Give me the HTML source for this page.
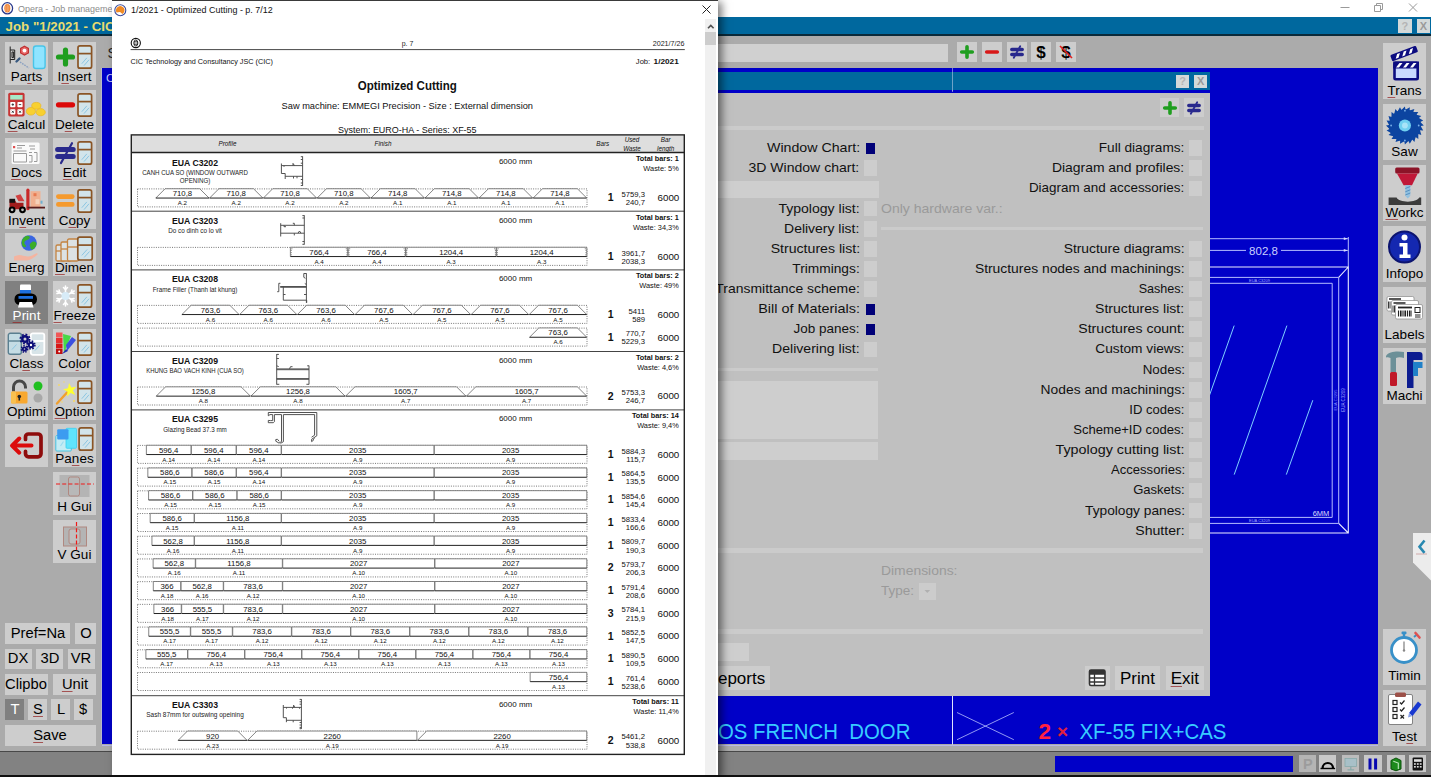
<!DOCTYPE html>
<html lang="en"><head><meta charset="utf-8"><title>Opera - Job management</title>
<style>html,body{margin:0;padding:0}body{width:1431px;height:777px;overflow:hidden;background:#ababab;font-family:"Liberation Sans", sans-serif;}#root{position:relative;width:1431px;height:777px;overflow:hidden}.layer{position:absolute;left:0;top:0;width:1431px;height:777px;overflow:hidden}.layer div,.abs{position:absolute}.t{position:absolute;white-space:pre;line-height:1;}u{text-decoration-color:rgba(150,40,40,.75);text-decoration-thickness:1px;text-underline-offset:2px}svg{overflow:visible}</style></head><body><div id="root">
<div id="app" class="layer">
<div style="left:0px;top:0px;width:1431px;height:17.5px;background:#fff;"></div>
<svg class="abs" style="left:1px;top:1.6px" width="13" height="13" viewBox="0 0 13 13"><ellipse cx="6.3" cy="6.3" rx="5.3" ry="5.6" fill="#fff" stroke="#2a3a8c" stroke-width="1.3"/><ellipse cx="6.3" cy="6.3" rx="3" ry="4.2" fill="#f08030"/><path d="M6.3 2.5v7.6M4.8 3.5v5.6M7.8 3.5v5.6" stroke="#fbd0a8" stroke-width=".5"/></svg>
<span class="t" style="top:3.7px;font-size:9.8px;color:#8c8c8c;left:17.6px;transform:scaleX(0.913);transform-origin:0 50%;">Opera - Job management</span>
<svg class="abs" style="left:1330px;top:0" width="101" height="17" viewBox="0 0 101 17"><g stroke="#9a9a9a" stroke-width="1" fill="none"><path d="M10.5 7.5h9"/><path d="M44.5 5.5h6v6h-6z M46.5 5.5v-2h6v6h-2"/><path d="M79 3.5l8 8M87 3.5l-8 8"/></g></svg>
<div style="left:0px;top:16.8px;width:1431px;height:19.7px;background:#00689e;border-bottom:2px solid #0a2a3a;box-sizing:border-box;"></div>
<div style="left:0px;top:36.5px;width:1431px;height:4px;background:linear-gradient(#8a8a8a,#ababab);"></div>
<span class="t" style="top:19.94px;font-size:13.3px;color:#e8dc70;font-weight:bold;left:5.6px;">Job "1/2021 - CIC</span>
<div style="left:1398px;top:19px;width:13.6px;height:13.9px;background:#d3d9d9;"></div>
<span class="t" style="top:20.89px;font-size:11px;color:#b4b4b4;font-weight:bold;left:1404.8px;transform:translateX(-50%);">?</span>
<div style="left:1416.5px;top:19px;width:13.6px;height:13.9px;background:#d3d9d9;"></div>
<span class="t" style="top:20.89px;font-size:11px;color:#9a9a9a;font-weight:bold;left:1423.3px;transform:translateX(-50%);">X</span>
<div style="left:0px;top:36px;width:1431px;height:741px;background:#ababab;"></div>
<div style="left:120px;top:44px;width:827.7px;height:18px;background:#d0d0d0;"></div>
<span class="t" style="top:46.15px;font-size:14px;color:#222;left:107.5px;">S</span>
<div style="left:957.4px;top:42.2px;width:20px;height:20.2px;background:#cdcdcd;"></div>
<svg class="abs" style="left:958.4px;top:43.4px" width="18" height="18" viewBox="-9 -9 18 18"><path d="M-5.3 0h10.6M0 -5.3v10.6" stroke="#1f9e1f" stroke-width="3.6" stroke-linecap="round"/></svg>
<div style="left:982.03px;top:42.2px;width:20px;height:20.2px;background:#cdcdcd;"></div>
<svg class="abs" style="left:983.03px;top:43.4px" width="18" height="18" viewBox="-9 -9 18 18"><path d="M-5.3 0h10.6" stroke="#d81818" stroke-width="3.6" stroke-linecap="round"/></svg>
<div style="left:1006.66px;top:42.2px;width:20px;height:20.2px;background:#cdcdcd;"></div>
<svg class="abs" style="left:1007.66px;top:43.4px" width="18" height="18" viewBox="-9 -9 18 18"><path d="M-5.2 -2.6h10.4M-5.2 2.6h10.4" stroke="#28288c" stroke-width="3.5" stroke-linecap="round"/><path d="M3.2 -5.8l-6.4 11.6" stroke="#2a2a90" stroke-width="1.8" stroke-linecap="round"/></svg>
<div style="left:1031.29px;top:42.2px;width:20px;height:20.2px;background:#cdcdcd;"></div>
<svg class="abs" style="left:1032.29px;top:43.4px" width="18" height="18" viewBox="-9 -9 18 18"><text x="0" y="5.6" text-anchor="middle" font-family='"Liberation Sans",sans-serif' font-weight="bold" font-size="17" fill="#000">$</text></svg>
<div style="left:1055.92px;top:42.2px;width:20px;height:20.2px;background:#cdcdcd;"></div>
<svg class="abs" style="left:1056.92px;top:43.4px" width="18" height="18" viewBox="-9 -9 18 18"><text x="0" y="5.6" text-anchor="middle" font-family='"Liberation Sans",sans-serif' font-weight="bold" font-size="17" fill="#000">$</text><path d="M-6 -6l12 12" stroke="#e02020" stroke-width="1.6"/></svg>
<div style="left:101.5px;top:67.7px;width:1276.6px;height:676.8px;background:#0000c8;"></div>
<div style="left:100.5px;top:67.7px;width:1px;height:676.8px;background:#b8b8cc;"></div>
<span class="t" style="top:72.57px;font-size:11.5px;color:#c8ccff;left:106px;">C</span>
<div style="left:952.2px;top:67.7px;width:1px;height:24.5px;background:rgba(200,210,235,.55);"></div>
<svg class="abs" style="left:0;top:0" width="1431" height="777" viewBox="0 0 1431 777"><g fill="none" stroke="#b4bcff" stroke-width="1"><path d="M1100 238.7H1347.8M1100 250.4H1246M1281 250.4H1347.8M1348.3 237V267"/><path d="M1347.8 238.7l-4 -1.4v2.8zM1347.8 250.4l-4 -1.4v2.8z" fill="#d8dcff" stroke="none"/><path d="M1100 277.4H1338.7V523.4H1100M1100 283.3H1332.2V517.4H1100"/></g><g fill="none" stroke="#eceeff" stroke-width="1.1"><path d="M1100 267H1348.3V533H1100M1338.7 277.4L1348.3 267M1338.7 523.4L1348.3 533"/></g><g fill="none" stroke="#7fd0ff" stroke-width="1"><path d="M1234.2 325.6L1200 422M1286.9 325.6L1234.2 474.6M1312.8 400.2L1286.3 474.6"/></g><text x="1263.5" y="255" text-anchor="middle" font-family='"Liberation Sans",sans-serif' font-size="11.5" fill="#ccd0ff">802,8</text><text x="1321" y="516.2" text-anchor="middle" font-family='"Liberation Sans",sans-serif' font-size="7.5" fill="#d8dcff">6MM</text><text x="1259.5" y="281.6" text-anchor="middle" font-family='"Liberation Sans",sans-serif' font-size="4" fill="#a0a8ff">EUA C3209</text><text x="1259.5" y="522.2" text-anchor="middle" font-family='"Liberation Sans",sans-serif' font-size="4" fill="#a0a8ff">EUA C3209</text><text transform="translate(1344.8 400) rotate(-90)" text-anchor="middle" font-family='"Liberation Sans",sans-serif' font-size="4.5" fill="#a0a8ff">EUA C3209</text><text transform="translate(1336.6 400) rotate(-90)" text-anchor="middle" font-family='"Liberation Sans",sans-serif' font-size="4" fill="#8088ff">EUA C3295</text><path d="M952.5 696V744.5" stroke="#e0e4ff" stroke-width="1"/><path d="M957 712.5L1013.8 739.7M957 739.7L1013.8 712.5" stroke="#b8c0ff" stroke-width="0.8"/><text x="718" y="739.2" font-family='"Liberation Sans",sans-serif' font-size="22.5" fill="#38ccff" xml:space="preserve" textLength="192.4" lengthAdjust="spacingAndGlyphs">OS FRENCH  DOOR</text><text x="1038.5" y="739.2" font-family='"Liberation Sans",sans-serif' font-size="22.5" font-weight="bold" fill="#ff2040">2</text><text x="1057" y="738" font-family='"Liberation Sans",sans-serif' font-size="19" font-weight="bold" fill="#e0203c">×</text><text x="1079.5" y="739.2" font-family='"Liberation Sans",sans-serif' font-size="22.5" fill="#38ccff" textLength="147" lengthAdjust="spacingAndGlyphs">XF-55 FIX+CAS</text></svg>
<div style="left:0px;top:744.5px;width:1431px;height:7px;background:#ababab;"></div>
<div style="left:101.5px;top:744.5px;width:1276.6px;height:1px;background:#b8b8e8;"></div>
<div style="left:0px;top:750.8px;width:1431px;height:1.3px;background:#484848;"></div>
<div style="left:0px;top:752.1px;width:1431px;height:23px;background:#828282;"></div>
<div style="left:0px;top:775px;width:1431px;height:2px;background:#101010;"></div>
<div style="left:1055px;top:755.6px;width:238px;height:16px;background:#0000c8;"></div>
<div style="left:1298.9px;top:754.5px;width:17.6px;height:17.9px;background:#b4b4b4;"></div><svg class="abs" style="left:1298.9px;top:754.5px" width="17.6" height="17.9" viewBox="0 0 17.6 17.9"><text x="8.8" y="14.2" text-anchor="middle" font-family='"Liberation Sans",sans-serif' font-size="14.5" font-weight="bold" fill="#9c9c9c">P</text></svg><div style="left:1318.9px;top:754.5px;width:17.6px;height:17.9px;background:#c8c8c8;"></div><svg class="abs" style="left:1318.9px;top:754.5px" width="17.6" height="17.9" viewBox="0 0 17.6 17.9"><path d="M2.5 13.2a6.3 6.3 0 0 1 12.6 0h-2.2a4.1 4.1 0 0 0 -8.2 0z" fill="#000"/><path d="M1.5 13.5h14.6" stroke="#000" stroke-width="1.4"/></svg><div style="left:1341.5px;top:754.5px;width:17.6px;height:17.9px;background:#bcbcbc;"></div><svg class="abs" style="left:1341.5px;top:754.5px" width="17.6" height="17.9" viewBox="0 0 17.6 17.9"><rect x="3" y="3.5" width="11.6" height="8" fill="#a8c0c8" stroke="#8aa" stroke-width=".8"/><path d="M8.8 11.5v3M5.5 14.8h6.6" stroke="#8aa" stroke-width="1.2"/></svg><div style="left:1364px;top:754.5px;width:17.6px;height:17.9px;background:#c8c8c8;"></div><svg class="abs" style="left:1364px;top:754.5px" width="17.6" height="17.9" viewBox="0 0 17.6 17.9"><path d="M6 3.5v11M11.6 3.5v11" stroke="#0808b0" stroke-width="3"/></svg><div style="left:1387px;top:754.5px;width:17.6px;height:17.9px;background:#c8c8c8;"></div><svg class="abs" style="left:1387px;top:754.5px" width="17.6" height="17.9" viewBox="0 0 17.6 17.9"><path d="M4 5.5l5-2.5 5 2.5v8.5l-5 1.8-5-1.8z" fill="#1c8a1c" stroke="#0a500a" stroke-width="1"/><path d="M6.3 6.3l5 1.8v6" fill="none" stroke="#bfe8bf" stroke-width="1.1"/></svg><div style="left:1408.9px;top:754.5px;width:17.6px;height:17.9px;background:#c8c8c8;"></div><svg class="abs" style="left:1408.9px;top:754.5px" width="17.6" height="17.9" viewBox="0 0 17.6 17.9"><rect x="3.6" y="2.6" width="10.4" height="12.8" rx="1" fill="#111"/><rect x="5" y="4.2" width="7.6" height="2.6" fill="#ddd"/><g fill="#ddd"><rect x="5" y="8.2" width="1.8" height="1.6"/><rect x="7.9" y="8.2" width="1.8" height="1.6"/><rect x="10.8" y="8.2" width="1.8" height="1.6"/><rect x="5" y="11" width="1.8" height="1.6"/><rect x="7.9" y="11" width="1.8" height="1.6"/><rect x="10.8" y="11" width="1.8" height="1.6"/></g></svg>
<div style="left:5px;top:42.3px;width:43px;height:43px;background:#cdcdcd;"></div><svg class="abs" style="left:5px;top:42.3px" width="43" height="30" viewBox="0 0 43 30"><g fill="none" stroke="#222" stroke-width="1"><path d="M5.2 4.5v17M5.2 8h4.5v9.5H5.2M7 10h1.6v5.6H7z"/></g><path d="M19.5 4.2l3.9 2.2v4.5l-3.9 2.2-3.9-2.2V6.4z" fill="#e86a6a" stroke="#c03030" stroke-width="1.2"/><circle cx="19.5" cy="8.6" r="1.9" fill="#fff"/><path d="M11.5 19.5l3-3" stroke="#3a5a80" stroke-width="2.4" stroke-linecap="round"/><path d="M15 20l9 6" stroke="#8aa0c0" stroke-width="1.4" stroke-dasharray="1.6 1"/><rect x="28.5" y="4" width="11.6" height="22.5" rx="2.6" fill="#8fe4ff" stroke="#48c4e8" stroke-width="1.4"/></svg><span class="t" style="top:70.27px;font-size:13.5px;color:#000;left:26.5px;transform:translateX(-50%);">Pa<u>r</u>ts</span><div style="left:53px;top:42.3px;width:43px;height:43px;background:#cdcdcd;"></div><svg class="abs" style="left:53px;top:42.3px" width="43" height="30" viewBox="0 0 43 30"><path d="M12.5 8v14M5.5 15h14" stroke="#1f9e1f" stroke-width="5.2" stroke-linecap="round"/><g transform="translate(24.2,3)"><rect x=".8" y=".8" width="13.6" height="22.4" rx="2" fill="#d2e4ea" stroke="#8a5526" stroke-width="1.7"/><path d="M.8 8.6h13.6" stroke="#8a5526" stroke-width="1.7"/><path d="M4.6 18.7l5 -5.8M6.8 20.6l5 -5.8" stroke="#8cc6e2" stroke-width="1"/></g></svg><span class="t" style="top:70.27px;font-size:13.5px;color:#000;left:74.5px;transform:translateX(-50%);">I<u>n</u>sert</span><div style="left:5px;top:90.05px;width:43px;height:43px;background:#cdcdcd;"></div><svg class="abs" style="left:5px;top:90.05px" width="43" height="30" viewBox="0 0 43 30"><rect x="3.2" y="2.8" width="16.4" height="23.8" rx="1.8" fill="#c63434"/><rect x="5.2" y="5" width="12.4" height="4.6" fill="#a8e8c8"/><g fill="#fff"><rect x="5.2" y="12" width="5.2" height="5.2" rx=".8"/><rect x="12.4" y="12" width="5.2" height="5.2" rx=".8"/><rect x="5.2" y="19.2" width="5.2" height="5.2" rx=".8"/><rect x="12.4" y="19.2" width="5.2" height="5.2" rx=".8"/></g><g stroke="#333" stroke-width=".9"><path d="M6.6 14.6h2.4M7.8 13.4v2.4M13.8 14.6h2.4M6.8 20.8l2 2M8.8 20.8l-2 2M14 20.8l2 2M16 20.8l-2 2"/></g><g fill="#f8d030" stroke="#eab820" stroke-width=".7"><ellipse cx="31.3" cy="15.8" rx="4.6" ry="3.4"/><ellipse cx="25.9" cy="21.3" rx="4.6" ry="3.8"/><ellipse cx="35.7" cy="22.2" rx="4.6" ry="3.6"/></g></svg><span class="t" style="top:118.02px;font-size:13.5px;color:#000;left:26.5px;transform:translateX(-50%);"><u>C</u>alcul</span><div style="left:53px;top:90.05px;width:43px;height:43px;background:#cdcdcd;"></div><svg class="abs" style="left:53px;top:90.05px" width="43" height="30" viewBox="0 0 43 30"><path d="M5.5 14.8h14" stroke="#dc0808" stroke-width="5.2" stroke-linecap="round"/><g transform="translate(24.2,3)"><rect x=".8" y=".8" width="13.6" height="22.4" rx="2" fill="#d2e4ea" stroke="#8a5526" stroke-width="1.7"/><path d="M.8 8.6h13.6" stroke="#8a5526" stroke-width="1.7"/><path d="M4.6 18.7l5 -5.8M6.8 20.6l5 -5.8" stroke="#8cc6e2" stroke-width="1"/></g></svg><span class="t" style="top:118.02px;font-size:13.5px;color:#000;left:74.5px;transform:translateX(-50%);">D<u>e</u>lete</span><div style="left:5px;top:137.8px;width:43px;height:43px;background:#cdcdcd;"></div><svg class="abs" style="left:5px;top:137.8px" width="43" height="30" viewBox="0 0 43 30"><rect x="6.6" y="4.6" width="28" height="21.5" rx="1.5" fill="#fafafa"/><rect x="8" y="8" width="2.2" height="2.2" fill="#e05050"/><g stroke="#9a9a9a" stroke-width="1" fill="none"><path d="M12 7.5h8M12 10h5M8.5 13h13M8.5 15.5v8.5h13v-8.5zM24 8h6M25 11h5M24 14.5h3M29 14.5h3v9h-3M24 17.5h3v6.5h-3"/></g></svg><span class="t" style="top:165.77px;font-size:13.5px;color:#000;left:26.5px;transform:translateX(-50%);"><u>D</u>ocs</span><div style="left:53px;top:137.8px;width:43px;height:43px;background:#cdcdcd;"></div><svg class="abs" style="left:53px;top:137.8px" width="43" height="30" viewBox="0 0 43 30"><path d="M4.6 11.4h15.6M4.6 18.6h15.6" stroke="#2a2a8c" stroke-width="5" stroke-linecap="round"/><path d="M19 5.2L8 25" stroke="#2a2a8c" stroke-width="2.2" stroke-linecap="round"/><g transform="translate(24.2,3)"><rect x=".8" y=".8" width="13.6" height="22.4" rx="2" fill="#d2e4ea" stroke="#8a5526" stroke-width="1.7"/><path d="M.8 8.6h13.6" stroke="#8a5526" stroke-width="1.7"/><path d="M4.6 18.7l5 -5.8M6.8 20.6l5 -5.8" stroke="#8cc6e2" stroke-width="1"/></g></svg><span class="t" style="top:165.77px;font-size:13.5px;color:#000;left:74.5px;transform:translateX(-50%);"><u>E</u>dit</span><div style="left:5px;top:185.55px;width:43px;height:43px;background:#cdcdcd;"></div><svg class="abs" style="left:5px;top:185.55px" width="43" height="30" viewBox="0 0 43 30"><g transform="translate(0.5,-1.8)"><path d="M25 7h10v16H25z" fill="#f0b090"/><rect x="28" y="9" width="3" height="3" fill="#e87a50"/><rect x="30" y="15" width="4" height="5" fill="#f6d0b8"/><rect x="35" y="16.5" width="2" height="3" fill="#70b0d0"/><path d="M22.4 6v18.5" stroke="#c82828" stroke-width="3.2" stroke-linecap="round"/><path d="M22 23.4h17.5" stroke="#5a1c1c" stroke-width="1.8"/><path d="M4 15h5l2 3.6h7V25H4z" fill="#a01c1c"/><path d="M4 14.6h5.6v4H4z" fill="#111"/><path d="M10 11.5l5-1.5 4 7h-6z" fill="#d04040"/><g fill="#c0c0c0" stroke="#000" stroke-width="2"><circle cx="6.6" cy="25.6" r="2.4"/><circle cx="17" cy="25.6" r="2.4"/></g></g></svg><span class="t" style="top:213.52px;font-size:13.5px;color:#000;left:26.5px;transform:translateX(-50%);">In<u>v</u>ent</span><div style="left:53px;top:185.55px;width:43px;height:43px;background:#cdcdcd;"></div><svg class="abs" style="left:53px;top:185.55px" width="43" height="30" viewBox="0 0 43 30"><path d="M5.3 10.6h14M5.3 18.4h14" stroke="#f59a2e" stroke-width="4.6" stroke-linecap="round"/><g transform="translate(24.2,3)"><rect x=".8" y=".8" width="13.6" height="22.4" rx="2" fill="#d2e4ea" stroke="#8a5526" stroke-width="1.7"/><path d="M.8 8.6h13.6" stroke="#8a5526" stroke-width="1.7"/><path d="M4.6 18.7l5 -5.8M6.8 20.6l5 -5.8" stroke="#8cc6e2" stroke-width="1"/></g></svg><span class="t" style="top:213.52px;font-size:13.5px;color:#000;left:74.5px;transform:translateX(-50%);">C<u>o</u>py</span><div style="left:5px;top:233.3px;width:43px;height:43px;background:#cdcdcd;"></div><svg class="abs" style="left:5px;top:233.3px" width="43" height="30" viewBox="0 0 43 30"><circle cx="24" cy="10" r="7.8" fill="#3a66e0"/><path d="M18.5 5c2-2.5 5-3 6-1.5s-1 3-3 3.8-3 2.7-1 4.7-1 3-2.5 1.5-2-6 .5-8.5zM27 9c2-1 4.5 0 4.5 2s-2.5 5.5-4.5 5.5-1-2-2-3 0-3.5 2-4.5z" fill="#3cae28"/><path d="M9 23.5c3-1.5 6-2 9-.8l5 .8c2 .3 5-1.5 8-3 1.5-.6 2.4.5 1 1.6-3 2.5-7 5.4-10 5.4H9z" fill="#f4b4a0"/></svg><span class="t" style="top:261.27px;font-size:13.5px;color:#000;left:26.5px;transform:translateX(-50%);">Energ</span><div style="left:53px;top:233.3px;width:43px;height:43px;background:#cdcdcd;"></div><svg class="abs" style="left:53px;top:233.3px" width="43" height="30" viewBox="0 0 43 30"><g fill="#dce2e4" stroke="#c48442" stroke-width="1.3"><rect x="3" y="12" width="9" height="16" rx="1.5"/><path d="M3 18h9"/><rect x="8" y="9" width="10" height="19" rx="1.5"/><path d="M8 16h10"/><rect x="14.5" y="6" width="11" height="22" rx="1.5"/><path d="M14.5 14h11"/></g><g transform="translate(24,3.3)"><rect x=".8" y=".8" width="14.4" height="22.9" rx="2" fill="#d2e4ea" stroke="#8a5526" stroke-width="1.7"/><path d="M.8 8.8h14.4" stroke="#8a5526" stroke-width="1.7"/><path d="M4.8 19.1l5.3 -5.9M7.2 21.1l5.3 -5.9" stroke="#8cc6e2" stroke-width="1"/></g></svg><span class="t" style="top:261.27px;font-size:13.5px;color:#000;left:74.5px;transform:translateX(-50%);"><u>D</u>imen</span><div style="left:5px;top:281.05px;width:43px;height:43px;background:#808080;"></div><svg class="abs" style="left:5px;top:281.05px" width="43" height="30" viewBox="0 0 43 30"><rect x="15" y="3.5" width="11" height="9" rx="1" fill="#fff"/><rect x="15" y="9" width="11" height="6" fill="#1c6ee0"/><rect x="9.5" y="12.5" width="22.5" height="11.5" rx="5.5" fill="#000"/><rect x="13.5" y="15" width="14.5" height="2.8" fill="#1c6ee0"/><path d="M14.5 21h12.5l1.5 5.5h-15.5z" fill="#fff"/></svg><span class="t" style="top:309.02px;font-size:13.5px;color:#fff;left:26.5px;transform:translateX(-50%);"><u>P</u>rint</span><div style="left:53px;top:281.05px;width:43px;height:43px;background:#cdcdcd;"></div><svg class="abs" style="left:53px;top:281.05px" width="43" height="30" viewBox="0 0 43 30"><g stroke="#fff" stroke-width="1.6" stroke-linecap="round" fill="none"><path d="M12.5 5v20M3.8 10l17.4 10M3.8 20l17.4-10"/><path d="M10.5 6.5l2 2 2-2M10.5 23.5l2-2 2 2M4 12.5l2.8-.7-.7-2.8M21 17.5l-2.8.7.7 2.8M4 17.5l2.8.7-.7 2.8M21 12.5l-2.8-.7.7-2.8"/></g><circle cx="12.5" cy="15" r="4" fill="#d8ecf8"/><g transform="translate(24.2,3)"><rect x=".8" y=".8" width="13.6" height="22.4" rx="2" fill="#d2e4ea" stroke="#8a5526" stroke-width="1.7"/><path d="M.8 8.6h13.6" stroke="#8a5526" stroke-width="1.7"/><path d="M4.6 18.7l5 -5.8M6.8 20.6l5 -5.8" stroke="#8cc6e2" stroke-width="1"/></g></svg><span class="t" style="top:309.02px;font-size:13.5px;color:#000;left:74.5px;transform:translateX(-50%);"><u>F</u>reeze</span><div style="left:5px;top:328.8px;width:43px;height:43px;background:#cdcdcd;"></div><svg class="abs" style="left:5px;top:328.8px" width="43" height="30" viewBox="0 0 43 30"><g transform="translate(2.5,3.5)"><rect x=".8" y=".8" width="13" height="21" rx="2" fill="#c4dce4" stroke="#5a7f90" stroke-width="1.4"/><path d="M.8 8.5h13" stroke="#5a7f90" stroke-width="1.4"/><path d="M4.5 17l4.5-5" stroke="#8cc6e2" stroke-width="1"/></g><g transform="translate(25,3.5)"><rect x=".8" y=".8" width="13.5" height="21.5" rx="2" fill="#d8e4e8" stroke="#fff" stroke-width="1.8"/><path d="M.8 8.5h13.5" stroke="#fff" stroke-width="1.8"/><path d="M5 18l4.5-5" stroke="#8cc6e2" stroke-width="1"/></g><g fill="none" stroke="#0c0c78"><circle cx="20" cy="10" r="2.7" stroke-width="2.4"/><circle cx="20" cy="10" r="4.6" stroke-width="1.8" stroke-dasharray="1.8 1.8"/><circle cx="26" cy="16" r="2.2" stroke-width="2"/><circle cx="26" cy="16" r="3.9" stroke-width="1.6" stroke-dasharray="1.6 1.5"/><circle cx="19.5" cy="20" r="1.7" stroke-width="1.8"/><circle cx="19.5" cy="20" r="3.2" stroke-width="1.4" stroke-dasharray="1.4 1.3"/></g></svg><span class="t" style="top:356.77px;font-size:13.5px;color:#000;left:26.5px;transform:translateX(-50%);">Cl<u>a</u>ss</span><div style="left:53px;top:328.8px;width:43px;height:43px;background:#cdcdcd;"></div><svg class="abs" style="left:53px;top:328.8px" width="43" height="30" viewBox="0 0 43 30"><g><rect x="3" y="3.5" width="6.5" height="5" fill="#f05858"/><rect x="3" y="9" width="6.5" height="5" fill="#e83030"/><rect x="3" y="14.5" width="6.5" height="5" fill="#d81818"/><rect x="3" y="20" width="6.5" height="5" fill="#c01010"/><circle cx="6.2" cy="22.5" r="1" fill="#fff"/><path d="M10 5l8 2-7 17z" fill="#48d848"/><path d="M13 16l6-8 4 3-9 11z" fill="#3c50e0"/><path d="M9 25l4-5 2 2z" fill="#2030b0"/></g><g transform="translate(24.2,3)"><rect x=".8" y=".8" width="13.6" height="22.4" rx="2" fill="#d2e4ea" stroke="#8a5526" stroke-width="1.7"/><path d="M.8 8.6h13.6" stroke="#8a5526" stroke-width="1.7"/><path d="M4.6 18.7l5 -5.8M6.8 20.6l5 -5.8" stroke="#8cc6e2" stroke-width="1"/></g></svg><span class="t" style="top:356.77px;font-size:13.5px;color:#000;left:74.5px;transform:translateX(-50%);">Co<u>l</u>or</span><div style="left:5px;top:376.55px;width:43px;height:43px;background:#cdcdcd;"></div><svg class="abs" style="left:5px;top:376.55px" width="43" height="30" viewBox="0 0 43 30"><path d="M8.5 14.5v-4.5a6 6 0 0 1 12 0v1.5" fill="none" stroke="#484848" stroke-width="3"/><rect x="6" y="14.5" width="16.5" height="12" rx="1.5" fill="#f8a830"/><rect x="6" y="14.5" width="5" height="12" rx="1.5" fill="#f8c050"/><circle cx="14.3" cy="19.5" r="1.8" fill="#222"/><path d="M14.3 20v3.5" stroke="#222" stroke-width="1.6"/><circle cx="33" cy="9" r="4.5" fill="#20c020"/><circle cx="33" cy="21" r="4.5" fill="#a8a8a8"/></svg><span class="t" style="top:404.52px;font-size:13.5px;color:#000;left:26.5px;transform:translateX(-50%);">Optimi</span><div style="left:53px;top:376.55px;width:43px;height:43px;background:#cdcdcd;"></div><svg class="abs" style="left:53px;top:376.55px" width="43" height="30" viewBox="0 0 43 30"><path d="M4 26.5l10-11" stroke="#f0a030" stroke-width="2.4" stroke-linecap="round"/><path d="M16 6l2.3 4.5 5-.7-3.4 3.7 2.4 4.5-4.7-2-3.6 3.5.5-5-4.5-2.3 5-.9z" fill="#ffff30"/><g fill="#f6d860"><circle cx="6" cy="8" r=".9"/><circle cx="9" cy="25" r=".8"/><circle cx="21" cy="24" r="1"/><circle cx="11" cy="5" r=".7"/></g><g transform="translate(24.2,3)"><rect x=".8" y=".8" width="13.6" height="22.4" rx="2" fill="#d2e4ea" stroke="#8a5526" stroke-width="1.7"/><path d="M.8 8.6h13.6" stroke="#8a5526" stroke-width="1.7"/><path d="M4.6 18.7l5 -5.8M6.8 20.6l5 -5.8" stroke="#8cc6e2" stroke-width="1"/></g></svg><span class="t" style="top:404.52px;font-size:13.5px;color:#000;left:74.5px;transform:translateX(-50%);"><u>O</u>ption</span><div style="left:5px;top:424.3px;width:43px;height:43px;background:#cdcdcd;"></div><svg class="abs" style="left:5px;top:424.3px" width="43" height="43" viewBox="0 0 43 43"><path d="M20.5 15.5v-2.5a3 3 0 0 1 3-3h9.5a3 3 0 0 1 3 3v16.8a3 3 0 0 1-3 3h-9.5a3 3 0 0 1-3-3v-2.5" fill="none" stroke="#8e0c0c" stroke-width="3.7" stroke-linecap="round"/><path d="M9.5 21.6h17M14.3 14.5l-7.3 7.1 7.3 7.1" fill="none" stroke="#dc0c0c" stroke-width="4" stroke-linecap="round" stroke-linejoin="round"/></svg><div style="left:53px;top:424.3px;width:43px;height:43px;background:#cdcdcd;"></div><svg class="abs" style="left:53px;top:424.3px" width="43" height="30" viewBox="0 0 43 30"><rect x="2.8" y="11.5" width="15.5" height="15.5" rx="1" fill="#c4ecf4" stroke="#48c4e0" stroke-width="1"/><rect x="13" y="4.3" width="10.5" height="20" rx="1" fill="#60e4fc" stroke="#38d0f0" stroke-width=".8"/><rect x="4.2" y="5.3" width="11.3" height="10.2" rx="1" fill="#3c9cf0"/><path d="M7.5 22l3-4.5" stroke="#9adcf0" stroke-width="1.2"/><g transform="translate(25.3,3)"><rect x=".8" y=".8" width="13.6" height="22.4" rx="2" fill="#d2e4ea" stroke="#8a5526" stroke-width="1.7"/><path d="M.8 8.6h13.6" stroke="#8a5526" stroke-width="1.7"/><path d="M4.6 18.7l5 -5.8M6.8 20.6l5 -5.8" stroke="#8cc6e2" stroke-width="1"/></g></svg><span class="t" style="top:452.27px;font-size:13.5px;color:#000;left:74.5px;transform:translateX(-50%);">Pa<u>n</u>es</span><div style="left:53px;top:472.05px;width:43px;height:43px;background:#cdcdcd;"></div><svg class="abs" style="left:53px;top:472.05px" width="43" height="30" viewBox="0 0 43 30"><rect x="6.5" y="3" width="30" height="22" fill="#b4b4b4"/><rect x="15.5" y="5" width="11" height="19" rx="2" fill="#b8b8b8" stroke="#b08880" stroke-width="1"/><path d="M3 12h38" stroke="#f01818" stroke-width="1.2" stroke-dasharray="4 2.2"/></svg><span class="t" style="top:500.02px;font-size:13.5px;color:#000;left:74.5px;transform:translateX(-50%);">H Gui</span><div style="left:53px;top:519.8px;width:43px;height:43px;background:#cdcdcd;"></div><svg class="abs" style="left:53px;top:519.8px" width="43" height="30" viewBox="0 0 43 30"><rect x="10.5" y="7" width="23" height="19" fill="#b4b4b4" stroke="#b08880" stroke-width="1"/><rect x="16" y="9" width="11" height="15" rx="2" fill="#c0c0c0" stroke="#b08880" stroke-width="1"/><path d="M23.5 2v28" stroke="#f01818" stroke-width="1.2" stroke-dasharray="4 2.2"/></svg><span class="t" style="top:547.77px;font-size:13.5px;color:#000;left:74.5px;transform:translateX(-50%);">V Gui</span><div style="left:4.7px;top:623.4px;width:65.7px;height:20.5px;background:#cdcdcd;"></div><span class="t" style="top:625.23px;font-size:15.5px;color:#000;left:37.55px;transform:translateX(-50%) scaleX(0.95);">Pref=Na</span><div style="left:75px;top:623.4px;width:21px;height:20.5px;background:#cdcdcd;"></div><span class="t" style="top:625.23px;font-size:15.5px;color:#000;left:85.5px;transform:translateX(-50%) scaleX(0.95);">O</span><div style="left:4.7px;top:648.7px;width:26.9px;height:20.1px;background:#cdcdcd;"></div><span class="t" style="top:650.33px;font-size:15.5px;color:#000;left:18.15px;transform:translateX(-50%) scaleX(0.95);">DX</span><div style="left:36.4px;top:648.7px;width:26.8px;height:20.1px;background:#cdcdcd;"></div><span class="t" style="top:650.33px;font-size:15.5px;color:#000;left:49.8px;transform:translateX(-50%) scaleX(0.95);">3D</span><div style="left:68px;top:648.7px;width:26.9px;height:20.1px;background:#cdcdcd;"></div><span class="t" style="top:650.33px;font-size:15.5px;color:#000;left:81.45px;transform:translateX(-50%) scaleX(0.95);">VR</span><div style="left:4.7px;top:674px;width:43.5px;height:20.5px;background:#cdcdcd;"></div><span class="t" style="top:675.83px;font-size:15.5px;color:#000;left:26.45px;transform:translateX(-50%) scaleX(0.95);">Clipbo</span><div style="left:53.4px;top:674px;width:42.3px;height:20.5px;background:#cdcdcd;"></div><span class="t" style="top:675.83px;font-size:15.5px;color:#000;left:74.55px;transform:translateX(-50%) scaleX(0.95);"><u>U</u>nit</span><div style="left:4.7px;top:699.2px;width:19.8px;height:20.6px;background:#808080;"></div><span class="t" style="top:701.08px;font-size:15.5px;color:#fff;left:14.6px;transform:translateX(-50%) scaleX(0.95);">T</span><div style="left:27.7px;top:699.2px;width:19.7px;height:20.6px;background:#cdcdcd;"></div><span class="t" style="top:701.08px;font-size:15.5px;color:#000;left:37.55px;transform:translateX(-50%) scaleX(0.95);"><u>S</u></span><div style="left:50.6px;top:699.2px;width:19.8px;height:20.6px;background:#cdcdcd;"></div><span class="t" style="top:701.08px;font-size:15.5px;color:#000;left:60.5px;transform:translateX(-50%) scaleX(0.95);">L</span><div style="left:73.5px;top:699.2px;width:19.8px;height:20.6px;background:#cdcdcd;"></div><span class="t" style="top:701.08px;font-size:15.5px;color:#000;left:83.4px;transform:translateX(-50%) scaleX(0.95);">$</span><div style="left:4.7px;top:725px;width:91px;height:20.5px;background:#cdcdcd;"></div><span class="t" style="top:726.83px;font-size:15.5px;color:#000;left:50.2px;transform:translateX(-50%) scaleX(0.95);"><u>S</u>ave</span>
<div style="left:1383px;top:43px;width:43px;height:56px;background:#cdcdcd;"></div><svg class="abs" style="left:1383px;top:43px" width="43" height="42" viewBox="0 0 43 42"><rect x="11.5" y="19.8" width="23.2" height="16.5" rx="1.2" fill="#c8d8ff" stroke="#0c0c80" stroke-width="2.6"/><path d="M10.2 18.5h25.8v7h-25.8z" fill="#0c0c80"/><path d="M13 24.5l3.5-4.5h3l-3.5 4.5zM20 24.5l3.5-4.5h3l-3.5 4.5zM27 24.5l3.5-4.5h3l-3.5 4.5z" fill="#fff"/><g transform="rotate(-20.5 10.5 18.5)"><rect x="9.5" y="11.5" width="27.5" height="6.6" rx="1.3" fill="#0c0c80"/><path d="M13.5 16.8l3-4h3l-3 4zM20.5 16.8l3-4h3l-3 4zM27.5 16.8l3-4h3l-3 4z" fill="#fff"/></g></svg><span class="t" style="top:83.57px;font-size:13.5px;color:#000;left:1404.5px;transform:translateX(-50%);"><u>T</u>rans</span><div style="left:1383px;top:104px;width:43px;height:56px;background:#cdcdcd;"></div><svg class="abs" style="left:1383px;top:104px" width="43" height="42" viewBox="0 0 43 42"><g transform="translate(21.9,21.5)"><path d="M18.9 0L15.8 0.6L18.3 4.9L15.1 4.7L16.4 9.4L13.4 8.4L13.4 13.4L10.7 11.6L9.5 16.4L7.4 14L4.9 18.3L3.5 15.4L0 18.9L-0.6 15.8L-4.9 18.3L-4.7 15.1L-9.4 16.4L-8.4 13.4L-13.4 13.4L-11.6 10.7L-16.4 9.4L-14 7.4L-18.3 4.9L-15.4 3.5L-18.9 0L-15.8 -0.6L-18.3 -4.9L-15.1 -4.7L-16.4 -9.4L-13.4 -8.4L-13.4 -13.4L-10.7 -11.6L-9.5 -16.4L-7.4 -14L-4.9 -18.3L-3.5 -15.4L-0 -18.9L0.6 -15.8L4.9 -18.3L4.7 -15.1L9.5 -16.4L8.4 -13.4L13.4 -13.4L11.6 -10.7L16.4 -9.5L14 -7.4L18.3 -4.9L15.4 -3.5z" fill="#0c44a0"/><circle r="15.9" fill="#0c44a0"/><circle r="6.1" fill="#70d0f0"/><circle r="2.9" fill="#a8e4f8"/><g fill="#7ab0e8"><circle cx="-13.8" cy="0" r=".9"/><circle cx="13.8" cy="0" r=".9"/><circle cx="0" cy="-14.8" r=".9"/><circle cx="0" cy="15" r=".9"/></g></g></svg><span class="t" style="top:144.57px;font-size:13.5px;color:#000;left:1404.5px;transform:translateX(-50%);">Saw</span><div style="left:1383px;top:165px;width:43px;height:56px;background:#cdcdcd;"></div><svg class="abs" style="left:1383px;top:165px" width="43" height="42" viewBox="0 0 43 42"><rect x="12.2" y="2.5" width="24.3" height="6" rx="1.5" fill="#8c1428"/><path d="M14 8.4h20.7l-5.7 11.8h-8.4z" fill="#c01838"/><rect x="22.3" y="20.2" width="5" height="10.5" fill="#90c0e0"/><path d="M22.3 23.5l5-2M22.3 26.8l5-2M22.3 30l5-2" stroke="#5890c0" stroke-width="1"/><path d="M22.3 30.7h5l-2.5 2.8z" fill="#90c0e0"/><path d="M5.6 32.6h8c2 5.5 20.5 5.5 22.5 0h2.1v7.5h-32.6z" fill="#3c3c3c"/></svg><span class="t" style="top:205.57px;font-size:13.5px;color:#000;left:1404.5px;transform:translateX(-50%);"><u>W</u>orkc</span><div style="left:1383px;top:226px;width:43px;height:56px;background:#cdcdcd;"></div><svg class="abs" style="left:1383px;top:226px" width="43" height="42" viewBox="0 0 43 42"><circle cx="21.5" cy="21" r="15.5" fill="#1428b0" stroke="#0c1470" stroke-width="2"/><circle cx="21.5" cy="11.5" r="3" fill="#fff"/><path d="M16.5 17h8v11.5h3v3.5h-11v-3.5h3.5v-8h-3.5z" fill="#fff"/></svg><span class="t" style="top:266.57px;font-size:13.5px;color:#000;left:1404.5px;transform:translateX(-50%);">Infopo</span><div style="left:1383px;top:287px;width:43px;height:56px;background:#cdcdcd;"></div><svg class="abs" style="left:1383px;top:287px" width="43" height="42" viewBox="0 0 43 42"><g transform="translate(0,3.5)"><g stroke="#888" stroke-width=".7" fill="#fff"><rect x="4" y="6" width="27" height="14.5" rx="1.5"/><rect x="8.5" y="10" width="27" height="14.5" rx="1.5"/><rect x="12.5" y="14" width="27" height="14.5" rx="1.5"/></g><g stroke="#222" fill="none"><path d="M6 8.5h12M10.5 12.5h12" stroke-width="1.6"/><path d="M15 17h14" stroke-width="1.8"/><path d="M15.5 20v6M17.5 20v6M19 20v6M21 20v6M22.5 20v6M24.5 20v6M26.5 20v6M28 20v6" stroke-width="1.1"/><rect x="32" y="17" width="5" height="5" stroke-width="1"/><path d="M32 24.5h5.5M32 26.5h5.5" stroke-width="1"/><path d="M5.5 11v7M7 11v7M10 15v7M11.5 15v7" stroke-width=".9"/></g></g></svg><span class="t" style="top:327.57px;font-size:13.5px;color:#000;left:1404.5px;transform:translateX(-50%);">Labels</span><div style="left:1383px;top:348px;width:43px;height:56px;background:#cdcdcd;"></div><svg class="abs" style="left:1383px;top:348px" width="43" height="42" viewBox="0 0 43 42"><path d="M3 8c3-5 12-5 18-4v6c-3-1-6-1-8 0v14h-5.5v-14c-2-1-3-1-4.5-.5z" fill="#6c9098"/><rect x="7" y="24" width="7" height="14" rx="1.5" fill="#c01828"/><path d="M24 4h12.5a3 3 0 0 1 3 3v5h-9v28h-6.5z" fill="#0c1c90"/><path d="M30 14h9.5v6h-4.5v8h-5z" fill="#2080c8"/></svg><span class="t" style="top:388.57px;font-size:13.5px;color:#000;left:1404.5px;transform:translateX(-50%);">Machi</span><div style="left:1383px;top:628.6px;width:43px;height:56px;background:#cdcdcd;"></div><svg class="abs" style="left:1383px;top:628.6px" width="43" height="42" viewBox="0 0 43 42"><circle cx="21" cy="21" r="12.5" fill="#fff" stroke="#3890c8" stroke-width="2.8"/><rect x="18.5" y="2.5" width="5" height="2.8" rx="1" fill="#3890c8"/><path d="M21 5v4" stroke="#3890c8" stroke-width="2.4"/><path d="M31 8l3.5-3" stroke="#3890c8" stroke-width="2"/><path d="M32.5 4l4 4.5" stroke="#e05050" stroke-width="2.6" stroke-linecap="round"/><path d="M21 12.5v9" stroke="#888" stroke-width="1.3"/><circle cx="21" cy="21.5" r="1.2" fill="#888"/></svg><span class="t" style="top:669.17px;font-size:13.5px;color:#000;left:1404.5px;transform:translateX(-50%);">Timin</span><div style="left:1383px;top:689.8px;width:43px;height:56px;background:#cdcdcd;"></div><svg class="abs" style="left:1383px;top:689.8px" width="43" height="42" viewBox="0 0 43 42"><rect x="5.5" y="4.5" width="24" height="30" rx="1.5" fill="#fff" stroke="#777" stroke-width=".9"/><rect x="12" y="2.5" width="11" height="4.5" rx="1.5" fill="#9c5048"/><g fill="none" stroke="#222" stroke-width="1.2"><rect x="10" y="10.5" width="4" height="4"/><rect x="10" y="17.5" width="4" height="4"/><rect x="10" y="24.5" width="4" height="4"/><path d="M17 12.5l1.5 1.5 3-3.5M17 19.5l1.5 1.5 3-3.5M17.5 25l3.5 3.5M21 25l-3.5 3.5"/></g><path d="M26 23l9-11.5 3.5 3-9 11.5z" fill="#1838d0"/><path d="M26 23l3.5 3-4.5 1.5z" fill="#88a0e8"/></svg><span class="t" style="top:730.37px;font-size:13.5px;color:#000;left:1404.5px;transform:translateX(-50%);">Te<u>s</u>t</span><svg class="abs" style="left:1413px;top:533.4px" width="18" height="48" viewBox="0 0 18 48"><path d="M0 0h18v47.5L0 29.5z" fill="#ececec"/><path d="M11.5 7.5l-5 6.2 5 6.2" fill="none" stroke="#2888b0" stroke-width="2.6"/><path d="M3 21h11" stroke="#c08080" stroke-width=".6"/></svg>
</div>
<div id="dlg" class="layer">
<div style="left:600px;top:72.4px;width:609.6px;height:18.1px;background:#00689e;"></div>
<div style="left:600px;top:90.5px;width:609.6px;height:2px;background:#0000c8;"></div>
<div style="left:600px;top:92.5px;width:609.6px;height:603.5px;background:#c0c0c0;"></div>
<div style="left:952.2px;top:72.4px;width:1px;height:20px;background:rgba(200,210,235,.55);"></div>
<div style="left:1175.9px;top:74.7px;width:13.2px;height:13px;background:#d3d9d9;"></div>
<span class="t" style="top:76.09px;font-size:11px;color:#b4b4b4;font-weight:bold;left:1182.5px;transform:translateX(-50%);">?</span>
<div style="left:1194px;top:74.7px;width:13.2px;height:13px;background:#d3d9d9;"></div>
<span class="t" style="top:76.09px;font-size:11px;color:#9a9a9a;font-weight:bold;left:1200.6px;transform:translateX(-50%);">X</span>
<div style="left:1159.8px;top:98px;width:19.5px;height:18.7px;background:#cdcdcd;"></div>
<svg class="abs" style="left:1160.5px;top:99.2px" width="18" height="18" viewBox="-9 -9 18 18"><path d="M-5.3 0h10.6M0 -5.3v10.6" stroke="#1f9e1f" stroke-width="3.6" stroke-linecap="round"/></svg>
<div style="left:1184.4px;top:98px;width:19.5px;height:18.7px;background:#cdcdcd;"></div>
<svg class="abs" style="left:1185.2px;top:99.2px" width="18" height="18" viewBox="-9 -9 18 18"><path d="M-5.2 -2.6h10.4M-5.2 2.6h10.4" stroke="#28288c" stroke-width="3.5" stroke-linecap="round"/><path d="M3.2 -5.8l-6.4 11.6" stroke="#2a2a90" stroke-width="1.8" stroke-linecap="round"/></svg>
<div style="left:600px;top:125.7px;width:604.2px;height:4.6px;background:#cbcbcb;"></div>
<span class="t" style="top:141.19px;font-size:13.6px;color:#111;right:571.3px;transform:scaleX(1.045);transform-origin:100% 50%;">Window Chart:</span>
<div style="left:866px;top:142.7px;width:9px;height:11px;background:#000078;"></div>
<span class="t" style="top:161.32px;font-size:13.6px;color:#111;right:571.3px;transform:scaleX(1.033);transform-origin:100% 50%;">3D Window chart:</span>
<div style="left:863.7px;top:160.43px;width:13.2px;height:15.8px;background:#cdcdcd;"></div>
<span class="t" style="top:201.58px;font-size:13.6px;color:#111;right:571.3px;transform:scaleX(1.033);transform-origin:100% 50%;">Typology list:</span>
<div style="left:863.7px;top:200.69px;width:13.2px;height:15.8px;background:#cdcdcd;"></div>
<span class="t" style="top:221.71px;font-size:13.6px;color:#111;right:571.3px;transform:scaleX(1.026);transform-origin:100% 50%;">Delivery list:</span>
<div style="left:863.7px;top:220.82px;width:13.2px;height:15.8px;background:#cdcdcd;"></div>
<span class="t" style="top:241.84px;font-size:13.6px;color:#111;right:571.3px;transform:scaleX(1.039);transform-origin:100% 50%;">Structures list:</span>
<div style="left:863.7px;top:240.95px;width:13.2px;height:15.8px;background:#cdcdcd;"></div>
<span class="t" style="top:261.97px;font-size:13.6px;color:#111;right:571.3px;transform:scaleX(1.011);transform-origin:100% 50%;">Trimmings:</span>
<div style="left:863.7px;top:261.08px;width:13.2px;height:15.8px;background:#cdcdcd;"></div>
<span class="t" style="top:282.1px;font-size:13.6px;color:#111;right:571.3px;transform:scaleX(1.026);transform-origin:100% 50%;">Transmittance scheme:</span>
<div style="left:863.7px;top:281.21px;width:13.2px;height:15.8px;background:#cdcdcd;"></div>
<span class="t" style="top:302.23px;font-size:13.6px;color:#111;right:571.3px;transform:scaleX(1.06);transform-origin:100% 50%;">Bill of Materials:</span>
<div style="left:866px;top:303.74px;width:9px;height:11px;background:#000078;"></div>
<span class="t" style="top:322.36px;font-size:13.6px;color:#111;right:571.3px;transform:scaleX(0.992);transform-origin:100% 50%;">Job panes:</span>
<div style="left:866px;top:323.87px;width:9px;height:11px;background:#000078;"></div>
<span class="t" style="top:342.49px;font-size:13.6px;color:#111;right:571.3px;transform:scaleX(1.034);transform-origin:100% 50%;">Delivering list:</span>
<div style="left:863.7px;top:341.6px;width:13.2px;height:15.8px;background:#cdcdcd;"></div>
<div style="left:600px;top:180.5px;width:279px;height:17.5px;background:#cecece;"></div>
<span class="t" style="top:201.58px;font-size:13.6px;color:#9a9a9a;left:881px;transform:scaleX(1.032);transform-origin:0 50%;">Only hardware var.:</span>
<div style="left:881px;top:226.5px;width:321.5px;height:3.6px;background:#cbcbcb;"></div>
<span class="t" style="top:141.19px;font-size:13.6px;color:#111;right:246.4px;transform:scaleX(1.003);transform-origin:100% 50%;">Full diagrams:</span>
<div style="left:1188.9px;top:140.3px;width:13.5px;height:15.8px;background:#cdcdcd;"></div>
<span class="t" style="top:161.32px;font-size:13.6px;color:#111;right:246.4px;transform:scaleX(1.024);transform-origin:100% 50%;">Diagram and profiles:</span>
<div style="left:1188.9px;top:160.43px;width:13.5px;height:15.8px;background:#cdcdcd;"></div>
<span class="t" style="top:181.45px;font-size:13.6px;color:#111;right:246.4px;transform:scaleX(0.988);transform-origin:100% 50%;">Diagram and accessories:</span>
<div style="left:1188.9px;top:180.56px;width:13.5px;height:15.8px;background:#cdcdcd;"></div>
<span class="t" style="top:241.84px;font-size:13.6px;color:#111;right:246.4px;transform:scaleX(1.02);transform-origin:100% 50%;">Structure diagrams:</span>
<div style="left:1188.9px;top:240.95px;width:13.5px;height:15.8px;background:#cdcdcd;"></div>
<span class="t" style="top:261.97px;font-size:13.6px;color:#111;right:246.4px;transform:scaleX(1.02);transform-origin:100% 50%;">Structures nodes and machinings:</span>
<div style="left:1188.9px;top:261.08px;width:13.5px;height:15.8px;background:#cdcdcd;"></div>
<span class="t" style="top:282.1px;font-size:13.6px;color:#111;right:246.4px;transform:scaleX(0.926);transform-origin:100% 50%;">Sashes:</span>
<div style="left:1188.9px;top:281.21px;width:13.5px;height:15.8px;background:#cdcdcd;"></div>
<span class="t" style="top:302.23px;font-size:13.6px;color:#111;right:246.4px;transform:scaleX(1.034);transform-origin:100% 50%;">Structures list:</span>
<div style="left:1188.9px;top:301.34px;width:13.5px;height:15.8px;background:#cdcdcd;"></div>
<span class="t" style="top:322.36px;font-size:13.6px;color:#111;right:246.4px;transform:scaleX(1.036);transform-origin:100% 50%;">Structures count:</span>
<div style="left:1188.9px;top:321.47px;width:13.5px;height:15.8px;background:#cdcdcd;"></div>
<span class="t" style="top:342.49px;font-size:13.6px;color:#111;right:246.4px;transform:scaleX(1.008);transform-origin:100% 50%;">Custom views:</span>
<div style="left:1188.9px;top:341.6px;width:13.5px;height:15.8px;background:#cdcdcd;"></div>
<span class="t" style="top:362.62px;font-size:13.6px;color:#111;right:246.4px;transform:scaleX(0.984);transform-origin:100% 50%;">Nodes:</span>
<div style="left:1188.9px;top:361.73px;width:13.5px;height:15.8px;background:#cdcdcd;"></div>
<span class="t" style="top:382.75px;font-size:13.6px;color:#111;right:246.4px;transform:scaleX(1.017);transform-origin:100% 50%;">Nodes and machinings:</span>
<div style="left:1188.9px;top:381.86px;width:13.5px;height:15.8px;background:#cdcdcd;"></div>
<span class="t" style="top:402.88px;font-size:13.6px;color:#111;right:246.4px;transform:scaleX(0.959);transform-origin:100% 50%;">ID codes:</span>
<div style="left:1188.9px;top:401.99px;width:13.5px;height:15.8px;background:#cdcdcd;"></div>
<span class="t" style="top:423.01px;font-size:13.6px;color:#111;right:246.4px;transform:scaleX(0.964);transform-origin:100% 50%;">Scheme+ID codes:</span>
<div style="left:1188.9px;top:422.12px;width:13.5px;height:15.8px;background:#cdcdcd;"></div>
<span class="t" style="top:443.14px;font-size:13.6px;color:#111;right:246.4px;transform:scaleX(1.053);transform-origin:100% 50%;">Typology cutting list:</span>
<div style="left:1188.9px;top:442.25px;width:13.5px;height:15.8px;background:#cdcdcd;"></div>
<span class="t" style="top:463.27px;font-size:13.6px;color:#111;right:246.4px;transform:scaleX(0.96);transform-origin:100% 50%;">Accessories:</span>
<div style="left:1188.9px;top:462.38px;width:13.5px;height:15.8px;background:#cdcdcd;"></div>
<span class="t" style="top:483.4px;font-size:13.6px;color:#111;right:246.4px;transform:scaleX(0.96);transform-origin:100% 50%;">Gaskets:</span>
<div style="left:1188.9px;top:482.51px;width:13.5px;height:15.8px;background:#cdcdcd;"></div>
<span class="t" style="top:503.53px;font-size:13.6px;color:#111;right:246.4px;transform:scaleX(1.01);transform-origin:100% 50%;">Typology panes:</span>
<div style="left:1188.9px;top:502.64px;width:13.5px;height:15.8px;background:#cdcdcd;"></div>
<span class="t" style="top:523.66px;font-size:13.6px;color:#111;right:246.4px;transform:scaleX(1.037);transform-origin:100% 50%;">Shutter:</span>
<div style="left:1188.9px;top:522.77px;width:13.5px;height:15.8px;background:#cdcdcd;"></div>
<div style="left:600px;top:368.4px;width:278.4px;height:2.8px;background:#cbcbcb;"></div>
<div style="left:600px;top:380.8px;width:278.4px;height:58.7px;background:#cecece;"></div>
<div style="left:600px;top:441.5px;width:278.4px;height:18.1px;background:#cecece;"></div>
<div style="left:600px;top:548.2px;width:602.5px;height:4.5px;background:#cbcbcb;"></div>
<span class="t" style="top:564.29px;font-size:13.6px;color:#9a9a9a;left:881px;transform:scaleX(1.022);transform-origin:0 50%;">Dimensions:</span>
<span class="t" style="top:584.39px;font-size:13.6px;color:#9a9a9a;left:881px;transform:scaleX(0.992);transform-origin:0 50%;">Type:</span>
<div style="left:919px;top:583.3px;width:16.5px;height:16.5px;background:#cccccc;"></div>
<svg class="abs" style="left:919px;top:583.3px" width="16.5" height="16.5" viewBox="0 0 16.5 16.5"><path d="M5.5 7l2.8 3 2.8-3z" fill="#b0b0b0"/></svg>
<div style="left:600px;top:629.2px;width:602.5px;height:4.6px;background:#cbcbcb;"></div>
<div style="left:600px;top:643.3px;width:148.7px;height:17.3px;background:#cecece;"></div>
<div style="left:700px;top:666.4px;width:69.8px;height:24px;background:#cdcdcd;"></div>
<span class="t" style="top:670.11px;font-size:17px;color:#000;left:705.7px;">Reports</span>
<div style="left:1085.3px;top:666.4px;width:24.5px;height:23.4px;background:#cdcdcd;"></div>
<svg class="abs" style="left:1085.3px;top:666.4px" width="24.5" height="23.4" viewBox="0 0 24.5 23.4"><rect x="4.5" y="4" width="15.5" height="15.5" rx="1.5" fill="#fff" stroke="#333" stroke-width="1.6"/><path d="M4.5 8h15.5M4.5 12h15.5M4.5 16h15.5M9.5 8v11.5" stroke="#333" stroke-width="1.3"/><rect x="4.5" y="4" width="15.5" height="4" fill="#333"/></svg>
<div style="left:1115px;top:666.4px;width:44.9px;height:23.4px;background:#cdcdcd;"></div>
<span class="t" style="top:669.91px;font-size:17px;color:#000;left:1137.5px;transform:translateX(-50%);">Print</span>
<div style="left:1165.7px;top:666.4px;width:38.1px;height:23.4px;background:#cdcdcd;"></div>
<span class="t" style="top:669.91px;font-size:17px;color:#000;left:1184.8px;transform:translateX(-50%);"><u>E</u>xit</span>
</div>
<div id="doc" class="layer">
<div style="left:112.2px;top:0px;width:605.4px;height:777px;background:#fff;box-shadow:4px 2px 8px 0 rgba(0,0,0,.5);"></div>
<div style="left:112.2px;top:0px;width:605.4px;height:1px;background:#3a3a3a;"></div>
<div style="left:112.2px;top:775.2px;width:605.4px;height:1.8px;background:#101010;"></div>
<svg class="abs" style="left:114px;top:3.5px" width="13" height="13" viewBox="0 0 13 13"><circle cx="6.3" cy="6.3" r="5.5" fill="#fff" stroke="#3a4a9a" stroke-width="1.1"/><path d="M2.5 8.5a4.3 4.3 0 1 1 6 1.5l-2.5 -2z" fill="#f08a24"/></svg>
<span class="t" style="top:4.8px;font-size:9.8px;color:#111;left:130.6px;transform:scaleX(0.913);transform-origin:0 50%;">1/2021 - Optimized Cutting - p. 7/12</span>
<svg class="abs" style="left:700px;top:3px" width="14" height="14" viewBox="0 0 14 14"><path d="M2.5 2.5l8 8M10.5 2.5l-8 8" stroke="#222" stroke-width="1"/></svg>
<div style="left:705.2px;top:19.3px;width:10.8px;height:756px;background:#f0f0f0;"></div>
<div style="left:705.2px;top:32.3px;width:10.8px;height:12.5px;background:#cdcdcd;"></div>
<svg class="abs" style="left:705.2px;top:20.5px" width="11.3" height="11" viewBox="0 0 11.3 11"><path d="M3 7.3l2.8-2.9 2.8 2.9" fill="none" stroke="#505050" stroke-width="1.6"/></svg>
<svg class="abs" style="left:0;top:0" width="1431" height="777" viewBox="0 0 1431 777" font-family='"Liberation Sans",sans-serif' fill="#111"><style>.dot{fill:none;stroke:#555;stroke-width:.8;stroke-dasharray:1 1.300}.pc{fill:#fff;stroke:#666;stroke-width:.8}.pb{fill:none;stroke:#222;stroke-width:1}.ic{fill:none;stroke:#4a4a4a;stroke-width:.95}</style><circle cx="135.8" cy="43" r="4.6" fill="none" stroke="#111" stroke-width="1.1"/><ellipse cx="135.8" cy="43" rx="2" ry="3" fill="none" stroke="#111" stroke-width=".9"/><path d="M134 41.5h3.6M134 43h3.6M134 44.5h3.6" stroke="#111" stroke-width=".6"/><text x="407.5" y="45.9" font-size="7.6" text-anchor="middle" fill="#222" textLength="11.6" lengthAdjust="spacingAndGlyphs">p. 7</text><text x="684.5" y="45.9" font-size="7.6" text-anchor="end" fill="#222" textLength="31.8" lengthAdjust="spacingAndGlyphs">2021/7/26</text><path d="M130.6 49.6H684.8" stroke="#333" stroke-width=".9"/><text x="130.6" y="63.7" font-size="7.4" textLength="142.3" lengthAdjust="spacingAndGlyphs">CIC Technology and Consultancy JSC (CIC)</text><text x="650.2" y="63.7" font-size="7.6" text-anchor="end">Job:</text><text x="653.6" y="63.7" font-size="7.6" font-weight="bold" textLength="25.2" lengthAdjust="spacingAndGlyphs">1/2021</text><text x="407.3" y="90.4" font-size="11.9" text-anchor="middle" font-weight="bold" textLength="99.2" lengthAdjust="spacingAndGlyphs">Optimized Cutting</text><text x="407.3" y="109.4" font-size="9.3" text-anchor="middle" textLength="251.4" lengthAdjust="spacingAndGlyphs">Saw machine: EMMEGI Precision - Size : External dimension</text><text x="407.3" y="132.6" font-size="9.3" text-anchor="middle" textLength="138.6" lengthAdjust="spacingAndGlyphs">System: EURO-HA - Series: XF-55</text><rect x="131.7" y="135.4" width="552.6" height="16.6" fill="#dedede"/><text x="227.5" y="146.2" font-size="6.3" text-anchor="middle" font-style="italic">Profile</text><text x="383" y="146.2" font-size="6.3" text-anchor="middle" font-style="italic">Finish</text><text x="602.8" y="146.2" font-size="6.3" text-anchor="middle" font-style="italic">Bars</text><text x="632" y="142.4" font-size="6.3" text-anchor="middle" font-style="italic">Used</text><text x="632" y="150.8" font-size="6.3" text-anchor="middle" font-style="italic">Waste</text><text x="665.6" y="142.4" font-size="6.3" text-anchor="middle" font-style="italic">Bar</text><text x="665.6" y="150.8" font-size="6.3" text-anchor="middle" font-style="italic">length</text><text x="195" y="165.9" font-size="9.3" text-anchor="middle" font-weight="bold" textLength="46" lengthAdjust="spacingAndGlyphs">EUA C3202</text><text x="195" y="175.2" font-size="6.4" text-anchor="middle" fill="#222" textLength="105.7" lengthAdjust="spacingAndGlyphs">CANH CUA SO (WINDOW OUTWARD</text><text x="195" y="182.9" font-size="6.4" text-anchor="middle" fill="#222" textLength="30.5" lengthAdjust="spacingAndGlyphs">OPENING)</text><path class="ic" d="M302.6 156.3V185.9M300.8 156.7h1.8M300.8 159.5h1.8M300.8 163.2h1.8M300.8 179.5h1.8M300.8 183h1.8M300.8 185.5h1.8M281.4 163.5V173.5H285.2V179M281.4 165.6H302.6M285.2 176.3H302.6M293 165.6v-2.2l1.5 2.2M284 165.6v1.2M293.5 176.3v2.2M297 176.3v2"/><text x="515.6" y="164.1" font-size="8" text-anchor="middle">6000 mm</text><text x="678.8" y="161.1" font-size="7.3" text-anchor="end" font-weight="bold">Total bars: 1</text><text x="678.8" y="171" font-size="7.4" text-anchor="end">Waste: 5%</text><rect x="137.5" y="188.9" width="449.5" height="18" class="dot"/><path class="pc" d="M155.8 198.05L165.1 188.75H199.75L209.05 198.05"/><path class="pb" d="M155.8 198.05H209.05"/><text x="182.42" y="196.2" font-size="7.8" text-anchor="middle">710,8</text><text x="182.42" y="205.2" font-size="6.2" text-anchor="middle">A.2</text><path class="pc" d="M209.58 198.05L218.88 188.75H253.53L262.83 198.05"/><path class="pb" d="M209.58 198.05H262.83"/><text x="236.21" y="196.2" font-size="7.8" text-anchor="middle">710,8</text><text x="236.21" y="205.2" font-size="6.2" text-anchor="middle">A.2</text><path class="pc" d="M263.37 198.05L272.67 188.75H307.32L316.62 198.05"/><path class="pb" d="M263.37 198.05H316.62"/><text x="289.99" y="196.2" font-size="7.8" text-anchor="middle">710,8</text><text x="289.99" y="205.2" font-size="6.2" text-anchor="middle">A.2</text><path class="pc" d="M317.15 198.05L326.45 188.75H361.1L370.4 198.05"/><path class="pb" d="M317.15 198.05H370.4"/><text x="343.78" y="196.2" font-size="7.8" text-anchor="middle">710,8</text><text x="343.78" y="205.2" font-size="6.2" text-anchor="middle">A.2</text><path class="pc" d="M370.93 198.05L380.23 188.75H415.18L424.48 198.05"/><path class="pb" d="M370.93 198.05H424.48"/><text x="397.71" y="196.2" font-size="7.8" text-anchor="middle">714,8</text><text x="397.71" y="205.2" font-size="6.2" text-anchor="middle">A.1</text><path class="pc" d="M425.02 198.05L434.32 188.75H469.27L478.57 198.05"/><path class="pb" d="M425.02 198.05H478.57"/><text x="451.79" y="196.2" font-size="7.8" text-anchor="middle">714,8</text><text x="451.79" y="205.2" font-size="6.2" text-anchor="middle">A.1</text><path class="pc" d="M479.1 198.05L488.4 188.75H523.35L532.65 198.05"/><path class="pb" d="M479.1 198.05H532.65"/><text x="505.88" y="196.2" font-size="7.8" text-anchor="middle">714,8</text><text x="505.88" y="205.2" font-size="6.2" text-anchor="middle">A.1</text><path class="pc" d="M533.18 198.05L542.48 188.75H577.43L586.73 198.05"/><path class="pb" d="M533.18 198.05H586.73"/><text x="559.96" y="196.2" font-size="7.8" text-anchor="middle">714,8</text><text x="559.96" y="205.2" font-size="6.2" text-anchor="middle">A.1</text><text x="610.6" y="201.4" font-size="10.5" text-anchor="middle" font-weight="bold">1</text><text x="645" y="197" font-size="7.7" text-anchor="end">5759,3</text><text x="645" y="205.2" font-size="7.7" text-anchor="end">240,7</text><text x="679.3" y="201.3" font-size="9.8" text-anchor="end">6000</text><text x="195" y="223.6" font-size="9.3" text-anchor="middle" font-weight="bold" textLength="46" lengthAdjust="spacingAndGlyphs">EUA C3203</text><text x="195" y="232.9" font-size="6.4" text-anchor="middle" fill="#222" textLength="53.5" lengthAdjust="spacingAndGlyphs">Do co dinh co lo vit</text><path class="ic" d="M304.3 215.3V244.6M302.4 215.6h1.9M302.4 218h1.9M302.4 241.5h1.9M302.4 244.3h1.9M280.7 223.2V236.5M280.7 225.3H304.3M280.7 233.2H304.3M294.3 225.3v-2h-1.5M294.3 233.2v2.2M284 225.3v1.4h2M298 233.2l1.5-2.2 1.5 2.2"/><text x="515.6" y="222.7" font-size="8" text-anchor="middle">6000 mm</text><text x="678.8" y="219.7" font-size="7.3" text-anchor="end" font-weight="bold">Total bars: 1</text><text x="678.8" y="229.6" font-size="7.4" text-anchor="end">Waste: 34,3%</text><rect x="137.5" y="247.4" width="449.5" height="18" class="dot"/><path class="pc" d="M290.39 256.55V247.25H347.81V256.55"/><path class="dot" d="M292.39 248.75h-1.2v6.3h1.2M345.81 248.75h1.2v6.3h-1.2"/><path class="pb" d="M290.39 256.55H347.81"/><text x="319.1" y="254.7" font-size="7.8" text-anchor="middle">766,4</text><text x="319.1" y="263.7" font-size="6.2" text-anchor="middle">A.4</text><path class="pc" d="M348.18 256.55V247.25H405.6V256.55"/><path class="dot" d="M350.18 248.75h-1.2v6.3h1.2M403.6 248.75h1.2v6.3h-1.2"/><path class="pb" d="M348.18 256.55H405.6"/><text x="376.89" y="254.7" font-size="7.8" text-anchor="middle">766,4</text><text x="376.89" y="263.7" font-size="6.2" text-anchor="middle">A.4</text><path class="pc" d="M405.98 256.55V247.25H496.21V256.55"/><path class="dot" d="M407.98 248.75h-1.2v6.3h1.2M494.21 248.75h1.2v6.3h-1.2"/><path class="pb" d="M405.98 256.55H496.21"/><text x="451.09" y="254.7" font-size="7.8" text-anchor="middle">1204,4</text><text x="451.09" y="263.7" font-size="6.2" text-anchor="middle">A.3</text><path class="pc" d="M496.58 256.55V247.25H586.81V256.55"/><path class="dot" d="M498.58 248.75h-1.2v6.3h1.2M584.81 248.75h1.2v6.3h-1.2"/><path class="pb" d="M496.58 256.55H586.81"/><text x="541.7" y="254.7" font-size="7.8" text-anchor="middle">1204,4</text><text x="541.7" y="263.7" font-size="6.2" text-anchor="middle">A.3</text><text x="610.6" y="259.9" font-size="10.5" text-anchor="middle" font-weight="bold">1</text><text x="645" y="255.5" font-size="7.7" text-anchor="end">3961,7</text><text x="645" y="263.7" font-size="7.7" text-anchor="end">2038,3</text><text x="679.3" y="259.8" font-size="9.8" text-anchor="end">6000</text><text x="195" y="282.3" font-size="9.3" text-anchor="middle" font-weight="bold" textLength="46" lengthAdjust="spacingAndGlyphs">EUA C3208</text><text x="195" y="291.6" font-size="6.4" text-anchor="middle" fill="#222" textLength="84.5" lengthAdjust="spacingAndGlyphs">Frame Filler (Thanh lat khung)</text><path class="ic" d="M306.4 273.3V302.9M303.8 273.5h2.6M303.8 273.5v3.8l1.6 1M304.8 283.5l1.6 1M280.2 286.5H306.4M280.2 287.3H306.4M278.8 283.3V291.7M278.8 283.3h1.6M278.8 291.7h-1.6M283.3 286.7V300.2H306.4M283.3 294.5h2.2M304 294.5h2.4M306.7 300.2v2.5"/><text x="515.6" y="281.4" font-size="8" text-anchor="middle">6000 mm</text><text x="678.8" y="278.4" font-size="7.3" text-anchor="end" font-weight="bold">Total bars: 2</text><text x="678.8" y="288.3" font-size="7.4" text-anchor="end">Waste: 49%</text><rect x="137.5" y="305.4" width="449.5" height="18" class="dot"/><path class="pc" d="M181.89 314.55L191.19 305.25H229.8L239.1 314.55"/><path class="pb" d="M181.89 314.55H239.1"/><text x="210.5" y="312.7" font-size="7.8" text-anchor="middle">763,6</text><text x="210.5" y="321.7" font-size="6.2" text-anchor="middle">A.6</text><path class="pc" d="M239.63 314.55L248.93 305.25H287.54L296.84 314.55"/><path class="pb" d="M239.63 314.55H296.84"/><text x="268.23" y="312.7" font-size="7.8" text-anchor="middle">763,6</text><text x="268.23" y="321.7" font-size="6.2" text-anchor="middle">A.6</text><path class="pc" d="M297.37 314.55L306.67 305.25H345.28L354.58 314.55"/><path class="pb" d="M297.37 314.55H354.58"/><text x="325.97" y="312.7" font-size="7.8" text-anchor="middle">763,6</text><text x="325.97" y="321.7" font-size="6.2" text-anchor="middle">A.6</text><path class="pc" d="M355.11 314.55L364.41 305.25H403.32L412.62 314.55"/><path class="pb" d="M355.11 314.55H412.62"/><text x="383.86" y="312.7" font-size="7.8" text-anchor="middle">767,6</text><text x="383.86" y="321.7" font-size="6.2" text-anchor="middle">A.5</text><path class="pc" d="M413.15 314.55L422.45 305.25H461.36L470.66 314.55"/><path class="pb" d="M413.15 314.55H470.66"/><text x="441.9" y="312.7" font-size="7.8" text-anchor="middle">767,6</text><text x="441.9" y="321.7" font-size="6.2" text-anchor="middle">A.5</text><path class="pc" d="M471.19 314.55L480.49 305.25H519.39L528.69 314.55"/><path class="pb" d="M471.19 314.55H528.69"/><text x="499.94" y="312.7" font-size="7.8" text-anchor="middle">767,6</text><text x="499.94" y="321.7" font-size="6.2" text-anchor="middle">A.5</text><path class="pc" d="M529.23 314.55L538.53 305.25H577.43L586.73 314.55"/><path class="pb" d="M529.23 314.55H586.73"/><text x="557.98" y="312.7" font-size="7.8" text-anchor="middle">767,6</text><text x="557.98" y="321.7" font-size="6.2" text-anchor="middle">A.5</text><text x="610.6" y="317.9" font-size="10.5" text-anchor="middle" font-weight="bold">1</text><text x="645" y="313.5" font-size="7.7" text-anchor="end">5411</text><text x="645" y="321.7" font-size="7.7" text-anchor="end">589</text><text x="679.3" y="317.8" font-size="9.8" text-anchor="end">6000</text><rect x="137.5" y="328.11" width="449.5" height="18" class="dot"/><path class="pc" d="M529.53 337.26L538.83 327.96H577.43L586.73 337.26"/><path class="pb" d="M529.53 337.26H586.73"/><text x="558.13" y="335.41" font-size="7.8" text-anchor="middle">763,6</text><text x="558.13" y="344.41" font-size="6.2" text-anchor="middle">A.6</text><text x="610.6" y="340.61" font-size="10.5" text-anchor="middle" font-weight="bold">1</text><text x="645" y="336.21" font-size="7.7" text-anchor="end">770,7</text><text x="645" y="344.41" font-size="7.7" text-anchor="end">5229,3</text><text x="679.3" y="340.51" font-size="9.8" text-anchor="end">6000</text><text x="195" y="363.9" font-size="9.3" text-anchor="middle" font-weight="bold" textLength="46" lengthAdjust="spacingAndGlyphs">EUA C3209</text><text x="195" y="373.2" font-size="6.4" text-anchor="middle" fill="#222" textLength="97.5" lengthAdjust="spacingAndGlyphs">KHUNG BAO VACH KINH (CUA SO)</text><path class="ic" d="M276.7 354.1V384.6M276.7 354.4h2.2M276.7 358.5h2.2M276.7 365.8l2 .8M309 365.6V384.4M307.2 365.8h1.8M276.7 368.9H309M276.7 369.7H309M276.7 378.6H309M276.7 379.3H309M276.7 384.3h2.6M309 384.3h-2.6M289.5 368.9l1-2.2h2"/><text x="515.6" y="363" font-size="8" text-anchor="middle">6000 mm</text><text x="678.8" y="360" font-size="7.3" text-anchor="end" font-weight="bold">Total bars: 2</text><text x="678.8" y="369.9" font-size="7.4" text-anchor="end">Waste: 4,6%</text><rect x="137.5" y="387" width="449.5" height="18" class="dot"/><path class="pc" d="M156.25 396.15L165.55 386.85H241.1L250.4 396.15"/><path class="pb" d="M156.25 396.15H250.4"/><text x="203.32" y="394.3" font-size="7.8" text-anchor="middle">1256,8</text><text x="203.32" y="403.3" font-size="6.2" text-anchor="middle">A.8</text><path class="pc" d="M250.93 396.15L260.23 386.85H335.79L345.09 396.15"/><path class="pb" d="M250.93 396.15H345.09"/><text x="298.01" y="394.3" font-size="7.8" text-anchor="middle">1256,8</text><text x="298.01" y="403.3" font-size="6.2" text-anchor="middle">A.8</text><path class="pc" d="M345.62 396.15L354.92 386.85H456.61L465.91 396.15"/><path class="pb" d="M345.62 396.15H465.91"/><text x="405.76" y="394.3" font-size="7.8" text-anchor="middle">1605,7</text><text x="405.76" y="403.3" font-size="6.2" text-anchor="middle">A.7</text><path class="pc" d="M466.44 396.15L475.74 386.85H577.43L586.73 396.15"/><path class="pb" d="M466.44 396.15H586.73"/><text x="526.59" y="394.3" font-size="7.8" text-anchor="middle">1605,7</text><text x="526.59" y="403.3" font-size="6.2" text-anchor="middle">A.7</text><text x="610.6" y="399.5" font-size="10.5" text-anchor="middle" font-weight="bold">2</text><text x="645" y="395.1" font-size="7.7" text-anchor="end">5753,3</text><text x="645" y="403.3" font-size="7.7" text-anchor="end">246,7</text><text x="679.3" y="399.4" font-size="9.8" text-anchor="end">6000</text><text x="195" y="422.3" font-size="9.3" text-anchor="middle" font-weight="bold" textLength="46" lengthAdjust="spacingAndGlyphs">EUA C3295</text><text x="195" y="431.6" font-size="6.4" text-anchor="middle" fill="#222" textLength="63.7" lengthAdjust="spacingAndGlyphs">Glazing Bead 37.3 mm</text><path class="ic" d="M268.3 415.8V412.5H316.8V435.8L311.6 439.3V441.6L313.4 440.3V439.2L314.6 438.3M274.4 414.6H281.5M283.4 414.6H314.6V435.2L311.6 437.2M281.5 414.6V441.6L279 443.1L275.8 441.2V439.5L277.5 439.3L279.2 441.3M283.4 414.6V441.7L280.5 443.4M272.7 414.6V420.6H270.5L268.3 420.4V422.7H273.4L274.4 421.7V414.6M268.3 415.8L270 414.6H272.7"/><text x="515.6" y="421.4" font-size="8" text-anchor="middle">6000 mm</text><text x="678.8" y="418.4" font-size="7.3" text-anchor="end" font-weight="bold">Total bars: 14</text><text x="678.8" y="428.3" font-size="7.4" text-anchor="end">Waste: 9,4%</text><rect x="137.5" y="445.4" width="449.5" height="18" class="dot"/><path class="pc" d="M146.36 454.55V445.25H191.04V454.55"/><path class="pb" d="M146.36 454.55H191.04"/><text x="168.7" y="452.7" font-size="7.8" text-anchor="middle">596,4</text><text x="168.7" y="461.7" font-size="6.2" text-anchor="middle">A.14</text><path class="pc" d="M191.41 454.55V445.25H236.09V454.55"/><path class="pb" d="M191.41 454.55H236.09"/><text x="213.75" y="452.7" font-size="7.8" text-anchor="middle">596,4</text><text x="213.75" y="461.7" font-size="6.2" text-anchor="middle">A.14</text><path class="pc" d="M236.47 454.55V445.25H281.15V454.55"/><path class="pb" d="M236.47 454.55H281.15"/><text x="258.81" y="452.7" font-size="7.8" text-anchor="middle">596,4</text><text x="258.81" y="461.7" font-size="6.2" text-anchor="middle">A.14</text><path class="pc" d="M281.53 454.55V445.25H433.98V454.55"/><path class="pb" d="M281.53 454.55H433.98"/><text x="357.75" y="452.7" font-size="7.8" text-anchor="middle">2035</text><text x="357.75" y="461.7" font-size="6.2" text-anchor="middle">A.9</text><path class="pc" d="M434.36 454.55V445.25H586.81V454.55"/><path class="pb" d="M434.36 454.55H586.81"/><text x="510.58" y="452.7" font-size="7.8" text-anchor="middle">2035</text><text x="510.58" y="461.7" font-size="6.2" text-anchor="middle">A.9</text><text x="610.6" y="457.9" font-size="10.5" text-anchor="middle" font-weight="bold">1</text><text x="645" y="453.5" font-size="7.7" text-anchor="end">5884,3</text><text x="645" y="461.7" font-size="7.7" text-anchor="end">115,7</text><text x="679.3" y="457.8" font-size="9.8" text-anchor="end">6000</text><rect x="137.5" y="468.11" width="449.5" height="18" class="dot"/><path class="pc" d="M147.84 477.26V467.96H191.78V477.26"/><path class="pb" d="M147.84 477.26H191.78"/><text x="169.81" y="475.41" font-size="7.8" text-anchor="middle">586,6</text><text x="169.81" y="484.41" font-size="6.2" text-anchor="middle">A.15</text><path class="pc" d="M192.16 477.26V467.96H236.1V477.26"/><path class="pb" d="M192.16 477.26H236.1"/><text x="214.13" y="475.41" font-size="7.8" text-anchor="middle">586,6</text><text x="214.13" y="484.41" font-size="6.2" text-anchor="middle">A.15</text><path class="pc" d="M236.48 477.26V467.96H281.16V477.26"/><path class="pb" d="M236.48 477.26H281.16"/><text x="258.82" y="475.41" font-size="7.8" text-anchor="middle">596,4</text><text x="258.82" y="484.41" font-size="6.2" text-anchor="middle">A.14</text><path class="pc" d="M281.53 477.26V467.96H433.98V477.26"/><path class="pb" d="M281.53 477.26H433.98"/><text x="357.76" y="475.41" font-size="7.8" text-anchor="middle">2035</text><text x="357.76" y="484.41" font-size="6.2" text-anchor="middle">A.9</text><path class="pc" d="M434.36 477.26V467.96H586.81V477.26"/><path class="pb" d="M434.36 477.26H586.81"/><text x="510.59" y="475.41" font-size="7.8" text-anchor="middle">2035</text><text x="510.59" y="484.41" font-size="6.2" text-anchor="middle">A.9</text><text x="610.6" y="480.61" font-size="10.5" text-anchor="middle" font-weight="bold">1</text><text x="645" y="476.21" font-size="7.7" text-anchor="end">5864,5</text><text x="645" y="484.41" font-size="7.7" text-anchor="end">135,5</text><text x="679.3" y="480.51" font-size="9.8" text-anchor="end">6000</text><rect x="137.5" y="490.82" width="449.5" height="18" class="dot"/><path class="pc" d="M148.58 499.97V490.67H192.52V499.97"/><path class="pb" d="M148.58 499.97H192.52"/><text x="170.55" y="498.12" font-size="7.8" text-anchor="middle">586,6</text><text x="170.55" y="507.12" font-size="6.2" text-anchor="middle">A.15</text><path class="pc" d="M192.9 499.97V490.67H236.84V499.97"/><path class="pb" d="M192.9 499.97H236.84"/><text x="214.87" y="498.12" font-size="7.8" text-anchor="middle">586,6</text><text x="214.87" y="507.12" font-size="6.2" text-anchor="middle">A.15</text><path class="pc" d="M237.21 499.97V490.67H281.16V499.97"/><path class="pb" d="M237.21 499.97H281.16"/><text x="259.19" y="498.12" font-size="7.8" text-anchor="middle">586,6</text><text x="259.19" y="507.12" font-size="6.2" text-anchor="middle">A.15</text><path class="pc" d="M281.53 499.97V490.67H433.99V499.97"/><path class="pb" d="M281.53 499.97H433.99"/><text x="357.76" y="498.12" font-size="7.8" text-anchor="middle">2035</text><text x="357.76" y="507.12" font-size="6.2" text-anchor="middle">A.9</text><path class="pc" d="M434.36 499.97V490.67H586.81V499.97"/><path class="pb" d="M434.36 499.97H586.81"/><text x="510.59" y="498.12" font-size="7.8" text-anchor="middle">2035</text><text x="510.59" y="507.12" font-size="6.2" text-anchor="middle">A.9</text><text x="610.6" y="503.32" font-size="10.5" text-anchor="middle" font-weight="bold">1</text><text x="645" y="498.92" font-size="7.7" text-anchor="end">5854,6</text><text x="645" y="507.12" font-size="7.7" text-anchor="end">145,4</text><text x="679.3" y="503.22" font-size="9.8" text-anchor="end">6000</text><rect x="137.5" y="513.53" width="449.5" height="18" class="dot"/><path class="pc" d="M150.17 522.68V513.38H194.11V522.68"/><path class="pb" d="M150.17 522.68H194.11"/><text x="172.14" y="520.83" font-size="7.8" text-anchor="middle">586,6</text><text x="172.14" y="529.83" font-size="6.2" text-anchor="middle">A.15</text><path class="pc" d="M194.49 522.68V513.38H281.15V522.68"/><path class="pb" d="M194.49 522.68H281.15"/><text x="237.82" y="520.83" font-size="7.8" text-anchor="middle">1156,8</text><text x="237.82" y="529.83" font-size="6.2" text-anchor="middle">A.11</text><path class="pc" d="M281.53 522.68V513.38H433.98V522.68"/><path class="pb" d="M281.53 522.68H433.98"/><text x="357.75" y="520.83" font-size="7.8" text-anchor="middle">2035</text><text x="357.75" y="529.83" font-size="6.2" text-anchor="middle">A.9</text><path class="pc" d="M434.36 522.68V513.38H586.81V522.68"/><path class="pb" d="M434.36 522.68H586.81"/><text x="510.59" y="520.83" font-size="7.8" text-anchor="middle">2035</text><text x="510.59" y="529.83" font-size="6.2" text-anchor="middle">A.9</text><text x="610.6" y="526.03" font-size="10.5" text-anchor="middle" font-weight="bold">1</text><text x="645" y="521.63" font-size="7.7" text-anchor="end">5833,4</text><text x="645" y="529.83" font-size="7.7" text-anchor="end">166,6</text><text x="679.3" y="525.93" font-size="9.8" text-anchor="end">6000</text><rect x="137.5" y="536.24" width="449.5" height="18" class="dot"/><path class="pc" d="M151.94 545.39V536.09H194.11V545.39"/><path class="pb" d="M151.94 545.39H194.11"/><text x="173.03" y="543.54" font-size="7.8" text-anchor="middle">562,8</text><text x="173.03" y="552.54" font-size="6.2" text-anchor="middle">A.16</text><path class="pc" d="M194.48 545.39V536.09H281.15V545.39"/><path class="pb" d="M194.48 545.39H281.15"/><text x="237.82" y="543.54" font-size="7.8" text-anchor="middle">1156,8</text><text x="237.82" y="552.54" font-size="6.2" text-anchor="middle">A.11</text><path class="pc" d="M281.52 545.39V536.09H433.98V545.39"/><path class="pb" d="M281.52 545.39H433.98"/><text x="357.75" y="543.54" font-size="7.8" text-anchor="middle">2035</text><text x="357.75" y="552.54" font-size="6.2" text-anchor="middle">A.9</text><path class="pc" d="M434.36 545.39V536.09H586.81V545.39"/><path class="pb" d="M434.36 545.39H586.81"/><text x="510.58" y="543.54" font-size="7.8" text-anchor="middle">2035</text><text x="510.58" y="552.54" font-size="6.2" text-anchor="middle">A.9</text><text x="610.6" y="548.74" font-size="10.5" text-anchor="middle" font-weight="bold">1</text><text x="645" y="544.34" font-size="7.7" text-anchor="end">5809,7</text><text x="645" y="552.54" font-size="7.7" text-anchor="end">190,3</text><text x="679.3" y="548.64" font-size="9.8" text-anchor="end">6000</text><rect x="137.5" y="558.95" width="449.5" height="18" class="dot"/><path class="pc" d="M153.14 568.1V558.8H195.31V568.1"/><path class="pb" d="M153.14 568.1H195.31"/><text x="174.23" y="566.25" font-size="7.8" text-anchor="middle">562,8</text><text x="174.23" y="575.25" font-size="6.2" text-anchor="middle">A.16</text><path class="pc" d="M195.68 568.1V558.8H282.35V568.1"/><path class="pb" d="M195.68 568.1H282.35"/><text x="239.01" y="566.25" font-size="7.8" text-anchor="middle">1156,8</text><text x="239.01" y="575.25" font-size="6.2" text-anchor="middle">A.11</text><path class="pc" d="M282.72 568.1V558.8H434.58V568.1"/><path class="pb" d="M282.72 568.1H434.58"/><text x="358.65" y="566.25" font-size="7.8" text-anchor="middle">2027</text><text x="358.65" y="575.25" font-size="6.2" text-anchor="middle">A.10</text><path class="pc" d="M434.96 568.1V558.8H586.81V568.1"/><path class="pb" d="M434.96 568.1H586.81"/><text x="510.88" y="566.25" font-size="7.8" text-anchor="middle">2027</text><text x="510.88" y="575.25" font-size="6.2" text-anchor="middle">A.10</text><text x="610.6" y="571.45" font-size="10.5" text-anchor="middle" font-weight="bold">2</text><text x="645" y="567.05" font-size="7.7" text-anchor="end">5793,7</text><text x="645" y="575.25" font-size="7.7" text-anchor="end">206,3</text><text x="679.3" y="571.35" font-size="9.8" text-anchor="end">6000</text><rect x="137.5" y="581.66" width="449.5" height="18" class="dot"/><path class="pc" d="M153.31 590.81V581.51H180.73V590.81"/><path class="pb" d="M153.31 590.81H180.73"/><text x="167.02" y="588.96" font-size="7.8" text-anchor="middle">366</text><text x="167.02" y="597.96" font-size="6.2" text-anchor="middle">A.18</text><path class="pc" d="M181.11 590.81V581.51H223.27V590.81"/><path class="pb" d="M181.11 590.81H223.27"/><text x="202.19" y="588.96" font-size="7.8" text-anchor="middle">562,8</text><text x="202.19" y="597.96" font-size="6.2" text-anchor="middle">A.16</text><path class="pc" d="M223.65 590.81V581.51H282.35V590.81"/><path class="pb" d="M223.65 590.81H282.35"/><text x="253" y="588.96" font-size="7.8" text-anchor="middle">783,6</text><text x="253" y="597.96" font-size="6.2" text-anchor="middle">A.12</text><path class="pc" d="M282.73 590.81V581.51H434.58V590.81"/><path class="pb" d="M282.73 590.81H434.58"/><text x="358.65" y="588.96" font-size="7.8" text-anchor="middle">2027</text><text x="358.65" y="597.96" font-size="6.2" text-anchor="middle">A.10</text><path class="pc" d="M434.96 590.81V581.51H586.81V590.81"/><path class="pb" d="M434.96 590.81H586.81"/><text x="510.88" y="588.96" font-size="7.8" text-anchor="middle">2027</text><text x="510.88" y="597.96" font-size="6.2" text-anchor="middle">A.10</text><text x="610.6" y="594.16" font-size="10.5" text-anchor="middle" font-weight="bold">1</text><text x="645" y="589.76" font-size="7.7" text-anchor="end">5791,4</text><text x="645" y="597.96" font-size="7.7" text-anchor="end">208,6</text><text x="679.3" y="594.06" font-size="9.8" text-anchor="end">6000</text><rect x="137.5" y="604.37" width="449.5" height="18" class="dot"/><path class="pc" d="M153.86 613.52V604.22H181.28V613.52"/><path class="pb" d="M153.86 613.52H181.28"/><text x="167.57" y="611.67" font-size="7.8" text-anchor="middle">366</text><text x="167.57" y="620.67" font-size="6.2" text-anchor="middle">A.18</text><path class="pc" d="M181.66 613.52V604.22H223.27V613.52"/><path class="pb" d="M181.66 613.52H223.27"/><text x="202.46" y="611.67" font-size="7.8" text-anchor="middle">555,5</text><text x="202.46" y="620.67" font-size="6.2" text-anchor="middle">A.17</text><path class="pc" d="M223.65 613.52V604.22H282.35V613.52"/><path class="pb" d="M223.65 613.52H282.35"/><text x="253" y="611.67" font-size="7.8" text-anchor="middle">783,6</text><text x="253" y="620.67" font-size="6.2" text-anchor="middle">A.12</text><path class="pc" d="M282.73 613.52V604.22H434.58V613.52"/><path class="pb" d="M282.73 613.52H434.58"/><text x="358.65" y="611.67" font-size="7.8" text-anchor="middle">2027</text><text x="358.65" y="620.67" font-size="6.2" text-anchor="middle">A.10</text><path class="pc" d="M434.96 613.52V604.22H586.81V613.52"/><path class="pb" d="M434.96 613.52H586.81"/><text x="510.88" y="611.67" font-size="7.8" text-anchor="middle">2027</text><text x="510.88" y="620.67" font-size="6.2" text-anchor="middle">A.10</text><text x="610.6" y="616.87" font-size="10.5" text-anchor="middle" font-weight="bold">3</text><text x="645" y="612.47" font-size="7.7" text-anchor="end">5784,1</text><text x="645" y="620.67" font-size="7.7" text-anchor="end">215,9</text><text x="679.3" y="616.77" font-size="9.8" text-anchor="end">6000</text><rect x="137.5" y="627.08" width="449.5" height="18" class="dot"/><path class="pc" d="M148.74 636.23V626.93H190.35V636.23"/><path class="pb" d="M148.74 636.23H190.35"/><text x="169.55" y="634.38" font-size="7.8" text-anchor="middle">555,5</text><text x="169.55" y="643.38" font-size="6.2" text-anchor="middle">A.17</text><path class="pc" d="M190.73 636.23V626.93H232.34V636.23"/><path class="pb" d="M190.73 636.23H232.34"/><text x="211.53" y="634.38" font-size="7.8" text-anchor="middle">555,5</text><text x="211.53" y="643.38" font-size="6.2" text-anchor="middle">A.17</text><path class="pc" d="M232.72 636.23V626.93H291.42V636.23"/><path class="pb" d="M232.72 636.23H291.42"/><text x="262.07" y="634.38" font-size="7.8" text-anchor="middle">783,6</text><text x="262.07" y="643.38" font-size="6.2" text-anchor="middle">A.12</text><path class="pc" d="M291.8 636.23V626.93H350.5V636.23"/><path class="pb" d="M291.8 636.23H350.5"/><text x="321.15" y="634.38" font-size="7.8" text-anchor="middle">783,6</text><text x="321.15" y="643.38" font-size="6.2" text-anchor="middle">A.12</text><path class="pc" d="M350.87 636.23V626.93H409.58V636.23"/><path class="pb" d="M350.87 636.23H409.58"/><text x="380.23" y="634.38" font-size="7.8" text-anchor="middle">783,6</text><text x="380.23" y="643.38" font-size="6.2" text-anchor="middle">A.12</text><path class="pc" d="M409.95 636.23V626.93H468.66V636.23"/><path class="pb" d="M409.95 636.23H468.66"/><text x="439.3" y="634.38" font-size="7.8" text-anchor="middle">783,6</text><text x="439.3" y="643.38" font-size="6.2" text-anchor="middle">A.12</text><path class="pc" d="M469.03 636.23V626.93H527.73V636.23"/><path class="pb" d="M469.03 636.23H527.73"/><text x="498.38" y="634.38" font-size="7.8" text-anchor="middle">783,6</text><text x="498.38" y="643.38" font-size="6.2" text-anchor="middle">A.12</text><path class="pc" d="M528.11 636.23V626.93H586.81V636.23"/><path class="pb" d="M528.11 636.23H586.81"/><text x="557.46" y="634.38" font-size="7.8" text-anchor="middle">783,6</text><text x="557.46" y="643.38" font-size="6.2" text-anchor="middle">A.12</text><text x="610.6" y="639.58" font-size="10.5" text-anchor="middle" font-weight="bold">1</text><text x="645" y="635.18" font-size="7.7" text-anchor="end">5852,5</text><text x="645" y="643.38" font-size="7.7" text-anchor="end">147,5</text><text x="679.3" y="639.48" font-size="9.8" text-anchor="end">6000</text><rect x="137.5" y="649.79" width="449.5" height="18" class="dot"/><path class="pc" d="M145.89 658.94V649.64H187.51V658.94"/><path class="pb" d="M145.89 658.94H187.51"/><text x="166.7" y="657.09" font-size="7.8" text-anchor="middle">555,5</text><text x="166.7" y="666.09" font-size="6.2" text-anchor="middle">A.17</text><path class="pc" d="M187.88 658.94V649.64H244.55V658.94"/><path class="pb" d="M187.88 658.94H244.55"/><text x="216.22" y="657.09" font-size="7.8" text-anchor="middle">756,4</text><text x="216.22" y="666.09" font-size="6.2" text-anchor="middle">A.13</text><path class="pc" d="M244.93 658.94V649.64H301.59V658.94"/><path class="pb" d="M244.93 658.94H301.59"/><text x="273.26" y="657.09" font-size="7.8" text-anchor="middle">756,4</text><text x="273.26" y="666.09" font-size="6.2" text-anchor="middle">A.13</text><path class="pc" d="M301.97 658.94V649.64H358.64V658.94"/><path class="pb" d="M301.97 658.94H358.64"/><text x="330.3" y="657.09" font-size="7.8" text-anchor="middle">756,4</text><text x="330.3" y="666.09" font-size="6.2" text-anchor="middle">A.13</text><path class="pc" d="M359.01 658.94V649.64H415.68V658.94"/><path class="pb" d="M359.01 658.94H415.68"/><text x="387.35" y="657.09" font-size="7.8" text-anchor="middle">756,4</text><text x="387.35" y="666.09" font-size="6.2" text-anchor="middle">A.13</text><path class="pc" d="M416.06 658.94V649.64H472.72V658.94"/><path class="pb" d="M416.06 658.94H472.72"/><text x="444.39" y="657.09" font-size="7.8" text-anchor="middle">756,4</text><text x="444.39" y="666.09" font-size="6.2" text-anchor="middle">A.13</text><path class="pc" d="M473.1 658.94V649.64H529.77V658.94"/><path class="pb" d="M473.1 658.94H529.77"/><text x="501.43" y="657.09" font-size="7.8" text-anchor="middle">756,4</text><text x="501.43" y="666.09" font-size="6.2" text-anchor="middle">A.13</text><path class="pc" d="M530.14 658.94V649.64H586.81V658.94"/><path class="pb" d="M530.14 658.94H586.81"/><text x="558.48" y="657.09" font-size="7.8" text-anchor="middle">756,4</text><text x="558.48" y="666.09" font-size="6.2" text-anchor="middle">A.13</text><text x="610.6" y="662.29" font-size="10.5" text-anchor="middle" font-weight="bold">1</text><text x="645" y="657.89" font-size="7.7" text-anchor="end">5890,5</text><text x="645" y="666.09" font-size="7.7" text-anchor="end">109,5</text><text x="679.3" y="662.19" font-size="9.8" text-anchor="end">6000</text><rect x="137.5" y="672.5" width="449.5" height="18" class="dot"/><path class="pc" d="M530.15 681.65V672.35H586.81V681.65"/><path class="pb" d="M530.15 681.65H586.81"/><text x="558.48" y="679.8" font-size="7.8" text-anchor="middle">756,4</text><text x="558.48" y="688.8" font-size="6.2" text-anchor="middle">A.13</text><text x="610.6" y="685" font-size="10.5" text-anchor="middle" font-weight="bold">1</text><text x="645" y="680.6" font-size="7.7" text-anchor="end">761,4</text><text x="645" y="688.8" font-size="7.7" text-anchor="end">5238,6</text><text x="679.3" y="684.9" font-size="9.8" text-anchor="end">6000</text><text x="195" y="708.1" font-size="9.3" text-anchor="middle" font-weight="bold" textLength="46" lengthAdjust="spacingAndGlyphs">EUA C3303</text><text x="195" y="717.4" font-size="6.4" text-anchor="middle" fill="#222" textLength="97.5" lengthAdjust="spacingAndGlyphs">Sash 87mm for outswing opeining</text><path class="ic" d="M301.4 699.1V728.9M299.6 699.4h1.8M299.6 701.8h1.8M299.6 704.2h1.8M299.6 722.5h1.8M299.6 725h1.8M299.6 727.4h1.8M299.6 728.7h1.8M283.3 705V717.7H286.4V722.2M283.3 707.4H301.4M286.4 720.3H301.4M293.6 707.4v-2.2l1.2 2.2M286.5 707.4v1.2M292.5 707.4v1.3M299.5 707.4v1.3M293.2 720.3v2"/><text x="515.6" y="707.2" font-size="8" text-anchor="middle">6000 mm</text><text x="678.8" y="704.2" font-size="7.3" text-anchor="end" font-weight="bold">Total bars: 11</text><text x="678.8" y="714.1" font-size="7.4" text-anchor="end">Waste: 11,4%</text><rect x="137.5" y="731.2" width="449.5" height="18" class="dot"/><path class="pc" d="M178.13 740.35L187.43 731.05H237.75L247.05 740.35"/><path class="pb" d="M178.13 740.35H247.05"/><text x="212.59" y="738.5" font-size="7.8" text-anchor="middle">920</text><text x="212.59" y="747.5" font-size="6.2" text-anchor="middle">A.23</text><path class="pc" d="M247.58 740.35L256.88 731.05H416.89V740.35"/><path class="pb" d="M247.58 740.35H416.89"/><text x="332.24" y="738.5" font-size="7.8" text-anchor="middle">2260</text><text x="332.24" y="747.5" font-size="6.2" text-anchor="middle">A.19</text><path class="pc" d="M417.42 740.35L426.72 731.05H586.74V740.35"/><path class="pb" d="M417.42 740.35H586.74"/><text x="502.08" y="738.5" font-size="7.8" text-anchor="middle">2260</text><text x="502.08" y="747.5" font-size="6.2" text-anchor="middle">A.19</text><text x="610.6" y="743.7" font-size="10.5" text-anchor="middle" font-weight="bold">2</text><text x="645" y="739.3" font-size="7.7" text-anchor="end">5461,2</text><text x="645" y="747.5" font-size="7.7" text-anchor="end">538,8</text><text x="679.3" y="743.6" font-size="9.8" text-anchor="end">6000</text><path d="M131 211.2H685" stroke="#444" stroke-width="1"/><path d="M131 269.9H685" stroke="#444" stroke-width="1"/><path d="M131 351.5H685" stroke="#444" stroke-width="1"/><path d="M131 409.9H685" stroke="#444" stroke-width="1"/><path d="M131 695.7H685" stroke="#444" stroke-width="1"/><path d="M131 152.5H685" stroke="#222" stroke-width="1.5"/><rect x="131.3" y="134.9" width="553" height="619.5" fill="none" stroke="#222" stroke-width="1.4"/></svg>
</div>
</div></body></html>
